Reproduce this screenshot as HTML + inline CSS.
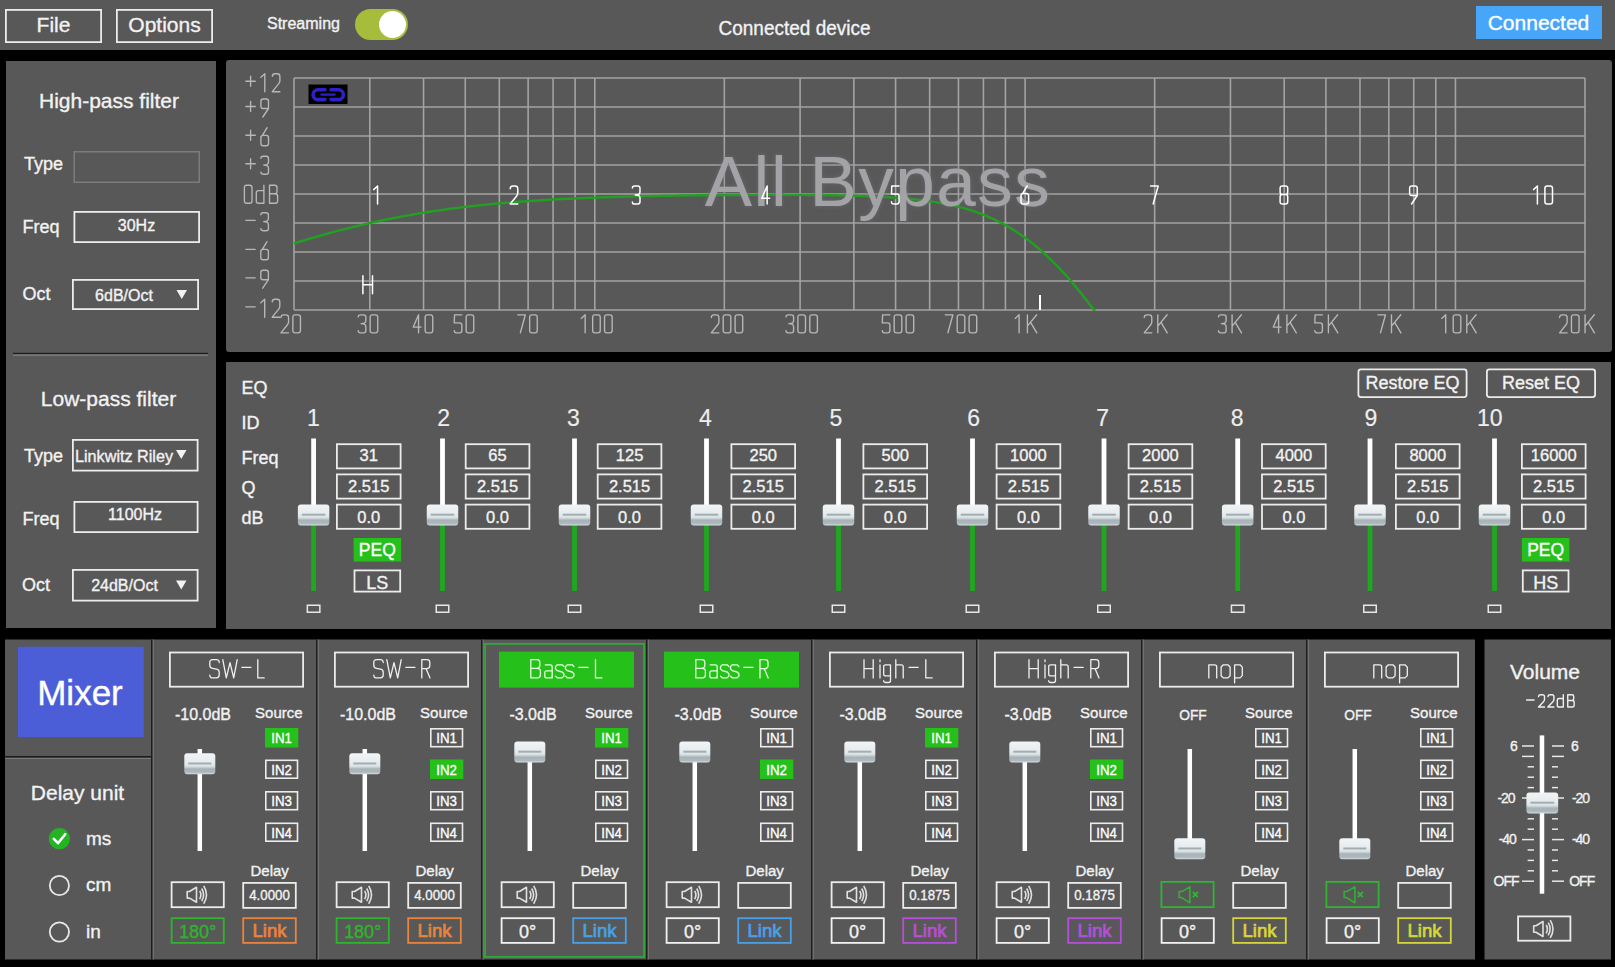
<!DOCTYPE html>
<html><head><meta charset="utf-8"><title>DSP</title>
<style>
html,body{margin:0;padding:0;background:#000;overflow:hidden;}
svg{display:block;font-family:"Liberation Sans",sans-serif;}
</style></head><body>
<svg width="1615" height="967" viewBox="0 0 1615 967">
<defs>
<linearGradient id="thumb" x1="0" y1="0" x2="0" y2="1">
<stop offset="0" stop-color="#f2f5f6"/>
<stop offset="0.40" stop-color="#e6ecef"/>
<stop offset="0.60" stop-color="#dde5e8"/>
<stop offset="0.68" stop-color="#c4ced2"/>
<stop offset="0.74" stop-color="#a8b3b8"/>
<stop offset="0.90" stop-color="#adb8bd"/>
<stop offset="1" stop-color="#d8e0e3"/>
</linearGradient>
<filter id="glow" x="-10%" y="-30%" width="120%" height="160%">
<feGaussianBlur in="SourceAlpha" stdDeviation="2.2" result="b"/>
<feFlood flood-color="#6a6e7c" flood-opacity="0.8"/>
<feComposite in2="b" operator="in" result="g"/>
<feMerge><feMergeNode in="g"/><feMergeNode in="SourceGraphic"/></feMerge>
</filter>
</defs>
<rect x="0.00" y="0.00" width="1615.00" height="967.00" fill="#000"/>
<rect x="0.00" y="0.00" width="1615.00" height="50.00" fill="#585858"/>
<rect x="5.90" y="9.90" width="95.20" height="32.20" fill="none" stroke="#ececec" stroke-width="1.8"/>
<text x="53.50" y="31.60" font-size="21" fill="#f2f2f2" text-anchor="middle" stroke="#f2f2f2" stroke-width="0.35">File</text>
<rect x="116.90" y="9.90" width="95.20" height="32.20" fill="none" stroke="#ececec" stroke-width="1.8"/>
<text x="164.50" y="31.60" font-size="21" fill="#f2f2f2" text-anchor="middle" stroke="#f2f2f2" stroke-width="0.35">Options</text>
<text x="267.00" y="29.00" font-size="16" fill="#f2f2f2" text-anchor="start" stroke="#f2f2f2" stroke-width="0.35">Streaming</text>
<rect x="355.00" y="9.00" width="53.00" height="31.00" rx="15.5" fill="#a5bd3a"/>
<circle cx="392.5" cy="24.5" r="13.5" fill="#ffffff"/>
<text transform="translate(718.50,34.70) scale(0.95,1)" font-size="20" fill="#f2f2f2" text-anchor="start" stroke="#f2f2f2" stroke-width="0.35">Connected device</text>
<rect x="1476.00" y="6.00" width="126.00" height="33.00" fill="#47a6f7"/>
<text x="1538.50" y="30.20" font-size="21" fill="#ffffff" text-anchor="middle" stroke="#ffffff" stroke-width="0.35">Connected</text>
<rect x="6.00" y="61.00" width="210.00" height="567.00" fill="#585858"/>
<text x="109.00" y="107.50" font-size="21" fill="#f2f2f2" text-anchor="middle" stroke="#f2f2f2" stroke-width="0.35">High-pass filter</text>
<text x="24.00" y="169.50" font-size="18" fill="#f2f2f2" text-anchor="start" stroke="#f2f2f2" stroke-width="0.35">Type</text>
<rect x="74.25" y="151.75" width="125.00" height="30.50" fill="none" stroke="#7c7c7c" stroke-width="1.5"/>
<text x="22.50" y="233.00" font-size="18" fill="#f2f2f2" text-anchor="start" stroke="#f2f2f2" stroke-width="0.35">Freq</text>
<rect x="74.40" y="211.90" width="124.70" height="30.20" fill="none" stroke="#ececec" stroke-width="1.8"/>
<text x="136.50" y="231.00" font-size="16" fill="#f2f2f2" text-anchor="middle" stroke="#f2f2f2" stroke-width="0.35">30Hz</text>
<text x="22.50" y="300.00" font-size="18" fill="#f2f2f2" text-anchor="start" stroke="#f2f2f2" stroke-width="0.35">Oct</text>
<rect x="72.90" y="279.90" width="125.20" height="29.20" fill="none" stroke="#ececec" stroke-width="1.8"/>
<text x="124.00" y="301.00" font-size="16" fill="#f2f2f2" text-anchor="middle" stroke="#f2f2f2" stroke-width="0.35">6dB/Oct</text>
<path d="M176.5,290 L187,290 L181.75,299 Z" fill="#f2f2f2"/>
<rect x="13.00" y="352.80" width="195.00" height="1.60" fill="#1c1c1c"/>
<rect x="13.00" y="354.40" width="195.00" height="1.30" fill="#858585"/>
<text x="108.50" y="406.00" font-size="21" fill="#f2f2f2" text-anchor="middle" stroke="#f2f2f2" stroke-width="0.35">Low-pass filter</text>
<text x="24.00" y="461.50" font-size="18" fill="#f2f2f2" text-anchor="start" stroke="#f2f2f2" stroke-width="0.35">Type</text>
<rect x="72.90" y="439.90" width="124.70" height="30.70" fill="none" stroke="#ececec" stroke-width="1.8"/>
<text x="75.00" y="461.50" font-size="16.2" fill="#f2f2f2" text-anchor="start" stroke="#f2f2f2" stroke-width="0.35">Linkwitz Riley</text>
<path d="M176,450 L186.5,450 L181.25,459 Z" fill="#f2f2f2"/>
<text x="22.50" y="525.00" font-size="18" fill="#f2f2f2" text-anchor="start" stroke="#f2f2f2" stroke-width="0.35">Freq</text>
<rect x="74.40" y="501.90" width="123.20" height="30.20" fill="none" stroke="#ececec" stroke-width="1.8"/>
<text x="135.00" y="520.00" font-size="16" fill="#f2f2f2" text-anchor="middle" stroke="#f2f2f2" stroke-width="0.35">1100Hz</text>
<text x="22.00" y="590.50" font-size="18" fill="#f2f2f2" text-anchor="start" stroke="#f2f2f2" stroke-width="0.35">Oct</text>
<rect x="72.90" y="569.90" width="124.70" height="30.70" fill="none" stroke="#ececec" stroke-width="1.8"/>
<text x="124.50" y="591.00" font-size="16" fill="#f2f2f2" text-anchor="middle" stroke="#f2f2f2" stroke-width="0.35">24dB/Oct</text>
<path d="M176,580.5 L186.5,580.5 L181.25,589.5 Z" fill="#f2f2f2"/>
<rect x="226.00" y="60.00" width="1386.00" height="292.00" rx="3" fill="#585858"/>
<g stroke="#a3a3a3" stroke-width="1.6" fill="none">
<line x1="294" y1="78" x2="1585" y2="78"/>
<line x1="294" y1="107" x2="1585" y2="107"/>
<line x1="294" y1="136" x2="1585" y2="136"/>
<line x1="294" y1="165" x2="1585" y2="165"/>
<line x1="294" y1="194" x2="1585" y2="194"/>
<line x1="294" y1="223" x2="1585" y2="223"/>
<line x1="294" y1="252" x2="1585" y2="252"/>
<line x1="294" y1="281" x2="1585" y2="281"/>
<line x1="294" y1="310" x2="1585" y2="310"/>
<line x1="294.00" y1="78" x2="294.00" y2="310"/>
<line x1="369.78" y1="78" x2="369.78" y2="310"/>
<line x1="423.54" y1="78" x2="423.54" y2="310"/>
<line x1="465.25" y1="78" x2="465.25" y2="310"/>
<line x1="499.32" y1="78" x2="499.32" y2="310"/>
<line x1="528.13" y1="78" x2="528.13" y2="310"/>
<line x1="553.09" y1="78" x2="553.09" y2="310"/>
<line x1="575.10" y1="78" x2="575.10" y2="310"/>
<line x1="594.79" y1="78" x2="594.79" y2="310"/>
<line x1="724.33" y1="78" x2="724.33" y2="310"/>
<line x1="800.11" y1="78" x2="800.11" y2="310"/>
<line x1="853.88" y1="78" x2="853.88" y2="310"/>
<line x1="895.58" y1="78" x2="895.58" y2="310"/>
<line x1="929.65" y1="78" x2="929.65" y2="310"/>
<line x1="958.46" y1="78" x2="958.46" y2="310"/>
<line x1="983.42" y1="78" x2="983.42" y2="310"/>
<line x1="1005.43" y1="78" x2="1005.43" y2="310"/>
<line x1="1025.12" y1="78" x2="1025.12" y2="310"/>
<line x1="1154.67" y1="78" x2="1154.67" y2="310"/>
<line x1="1230.44" y1="78" x2="1230.44" y2="310"/>
<line x1="1284.21" y1="78" x2="1284.21" y2="310"/>
<line x1="1325.91" y1="78" x2="1325.91" y2="310"/>
<line x1="1359.99" y1="78" x2="1359.99" y2="310"/>
<line x1="1388.80" y1="78" x2="1388.80" y2="310"/>
<line x1="1413.75" y1="78" x2="1413.75" y2="310"/>
<line x1="1435.77" y1="78" x2="1435.77" y2="310"/>
<line x1="1455.46" y1="78" x2="1455.46" y2="310"/>
<line x1="1585.00" y1="78" x2="1585.00" y2="310"/>
</g>
<g fill="none" stroke="#b8b8b8" stroke-width="1.35" stroke-linecap="round" stroke-linejoin="round">
<path transform="translate(245.20,73.00) scale(1.0,1.0)" vector-effect="non-scaling-stroke" d="M0.7,8.2 L10.1,8.2 M5.4,3.2 L5.4,13.2"/>
<path transform="translate(260.20,73.00) scale(1.0,1.0)" vector-effect="non-scaling-stroke" d="M0.7,4.3 L4.6,0.7 L4.6,18.7"/>
<path transform="translate(271.60,73.00) scale(1.0,1.0)" vector-effect="non-scaling-stroke" d="M0.7,3.4 Q0.9,0.7 3.4,0.7 L5.6,0.7 Q8.3,0.7 8.3,3.4 L8.3,7.8 Q8.3,9.4 7,10.9 L0.7,18.7 L8.3,18.7"/>
</g>
<g fill="none" stroke="#b8b8b8" stroke-width="1.35" stroke-linecap="round" stroke-linejoin="round">
<path transform="translate(245.20,98.30) scale(1.0,1.0)" vector-effect="non-scaling-stroke" d="M0.7,8.2 L10.1,8.2 M5.4,3.2 L5.4,13.2"/>
<path transform="translate(260.20,98.30) scale(1.0,1.0)" vector-effect="non-scaling-stroke" d="M8.3,10.2 L2.9,10.2 Q0.7,10.2 0.7,8 L0.7,2.9 Q0.7,0.7 2.9,0.7 L6.1,0.7 Q8.3,0.7 8.3,2.9 L8.3,10.2 L2.6,18.7"/>
</g>
<g fill="none" stroke="#b8b8b8" stroke-width="1.35" stroke-linecap="round" stroke-linejoin="round">
<path transform="translate(245.20,127.00) scale(1.0,1.0)" vector-effect="non-scaling-stroke" d="M0.7,8.2 L10.1,8.2 M5.4,3.2 L5.4,13.2"/>
<path transform="translate(260.20,127.00) scale(1.0,1.0)" vector-effect="non-scaling-stroke" d="M6.9,0.7 L2.2,8.3 M2.9,8.3 L6.1,8.3 Q8.3,8.3 8.3,10.5 L8.3,16.5 Q8.3,18.7 6.1,18.7 L2.9,18.7 Q0.7,18.7 0.7,16.5 L0.7,10.5 Q0.7,8.3 2.9,8.3 Z"/>
</g>
<g fill="none" stroke="#b8b8b8" stroke-width="1.35" stroke-linecap="round" stroke-linejoin="round">
<path transform="translate(245.20,155.50) scale(1.0,1.0)" vector-effect="non-scaling-stroke" d="M0.7,8.2 L10.1,8.2 M5.4,3.2 L5.4,13.2"/>
<path transform="translate(260.20,155.50) scale(1.0,1.0)" vector-effect="non-scaling-stroke" d="M0.7,2.8 Q0.7,0.7 2.9,0.7 L6.1,0.7 Q8.3,0.7 8.3,2.9 L8.3,6.6 Q8.3,8.2 6.8,9.1 L3.6,9.6 L6.8,10.1 Q8.3,11 8.3,12.6 L8.3,16.5 Q8.3,18.7 6.1,18.7 L2.9,18.7 Q0.7,18.7 0.7,16.6"/>
</g>
<g fill="none" stroke="#b8b8b8" stroke-width="1.35" stroke-linecap="round" stroke-linejoin="round">
<path transform="translate(243.70,184.50) scale(1.0,1.0)" vector-effect="non-scaling-stroke" d="M3,0.7 L6,0.7 Q8.3,0.7 8.3,3 L8.3,16.4 Q8.3,18.7 6,18.7 L3,18.7 Q0.7,18.7 0.7,16.4 L0.7,3 Q0.7,0.7 3,0.7 Z"/>
<path transform="translate(255.60,184.50) scale(1.0,1.0)" vector-effect="non-scaling-stroke" d="M8.3,0.7 L8.3,18.7 L2.9,18.7 Q0.7,18.7 0.7,16.5 L0.7,8.3 Q0.7,6.1 2.9,6.1 L8.3,6.1"/>
<path transform="translate(268.80,184.50) scale(1.0,1.0)" vector-effect="non-scaling-stroke" d="M0.7,0.7 L6,0.7 Q8.2,0.7 8.2,2.9 L8.2,7 Q8.2,9.2 6,9.2 L0.7,9.2 M6,9.2 Q8.8,9.2 8.8,11.4 L8.8,16.5 Q8.8,18.7 6.6,18.7 L0.7,18.7 L0.7,0.7"/>
</g>
<g fill="none" stroke="#b8b8b8" stroke-width="1.35" stroke-linecap="round" stroke-linejoin="round">
<path transform="translate(245.10,212.00) scale(1.0,1.0)" vector-effect="non-scaling-stroke" d="M0.7,8.3 L10.1,8.3"/>
<path transform="translate(260.10,212.00) scale(1.0,1.0)" vector-effect="non-scaling-stroke" d="M0.7,2.8 Q0.7,0.7 2.9,0.7 L6.1,0.7 Q8.3,0.7 8.3,2.9 L8.3,6.6 Q8.3,8.2 6.8,9.1 L3.6,9.6 L6.8,10.1 Q8.3,11 8.3,12.6 L8.3,16.5 Q8.3,18.7 6.1,18.7 L2.9,18.7 Q0.7,18.7 0.7,16.6"/>
</g>
<g fill="none" stroke="#b8b8b8" stroke-width="1.35" stroke-linecap="round" stroke-linejoin="round">
<path transform="translate(245.10,241.00) scale(1.0,1.0)" vector-effect="non-scaling-stroke" d="M0.7,8.3 L10.1,8.3"/>
<path transform="translate(260.10,241.00) scale(1.0,1.0)" vector-effect="non-scaling-stroke" d="M6.9,0.7 L2.2,8.3 M2.9,8.3 L6.1,8.3 Q8.3,8.3 8.3,10.5 L8.3,16.5 Q8.3,18.7 6.1,18.7 L2.9,18.7 Q0.7,18.7 0.7,16.5 L0.7,10.5 Q0.7,8.3 2.9,8.3 Z"/>
</g>
<g fill="none" stroke="#b8b8b8" stroke-width="1.35" stroke-linecap="round" stroke-linejoin="round">
<path transform="translate(245.10,269.50) scale(1.0,1.0)" vector-effect="non-scaling-stroke" d="M0.7,8.3 L10.1,8.3"/>
<path transform="translate(260.10,269.50) scale(1.0,1.0)" vector-effect="non-scaling-stroke" d="M8.3,10.2 L2.9,10.2 Q0.7,10.2 0.7,8 L0.7,2.9 Q0.7,0.7 2.9,0.7 L6.1,0.7 Q8.3,0.7 8.3,2.9 L8.3,10.2 L2.6,18.7"/>
</g>
<g fill="none" stroke="#b8b8b8" stroke-width="1.35" stroke-linecap="round" stroke-linejoin="round">
<path transform="translate(245.10,298.50) scale(1.0,1.0)" vector-effect="non-scaling-stroke" d="M0.7,8.3 L10.1,8.3"/>
<path transform="translate(260.10,298.50) scale(1.0,1.0)" vector-effect="non-scaling-stroke" d="M0.7,4.3 L4.6,0.7 L4.6,18.7"/>
<path transform="translate(271.50,298.50) scale(1.0,1.0)" vector-effect="non-scaling-stroke" d="M0.7,3.4 Q0.9,0.7 3.4,0.7 L5.6,0.7 Q8.3,0.7 8.3,3.4 L8.3,7.8 Q8.3,9.4 7,10.9 L0.7,18.7 L8.3,18.7"/>
</g>
<g fill="none" stroke="#b8b8b8" stroke-width="1.35" stroke-linecap="round" stroke-linejoin="round">
<path transform="translate(280.25,314.10) scale(1.0,1.0)" vector-effect="non-scaling-stroke" d="M0.7,3.4 Q0.9,0.7 3.4,0.7 L5.6,0.7 Q8.3,0.7 8.3,3.4 L8.3,7.8 Q8.3,9.4 7,10.9 L0.7,18.7 L8.3,18.7"/>
<path transform="translate(292.15,314.10) scale(1.0,1.0)" vector-effect="non-scaling-stroke" d="M3,0.7 L6,0.7 Q8.3,0.7 8.3,3 L8.3,16.4 Q8.3,18.7 6,18.7 L3,18.7 Q0.7,18.7 0.7,16.4 L0.7,3 Q0.7,0.7 3,0.7 Z"/>
</g>
<g fill="none" stroke="#b8b8b8" stroke-width="1.35" stroke-linecap="round" stroke-linejoin="round">
<path transform="translate(357.55,314.10) scale(1.0,1.0)" vector-effect="non-scaling-stroke" d="M0.7,2.8 Q0.7,0.7 2.9,0.7 L6.1,0.7 Q8.3,0.7 8.3,2.9 L8.3,6.6 Q8.3,8.2 6.8,9.1 L3.6,9.6 L6.8,10.1 Q8.3,11 8.3,12.6 L8.3,16.5 Q8.3,18.7 6.1,18.7 L2.9,18.7 Q0.7,18.7 0.7,16.6"/>
<path transform="translate(369.45,314.10) scale(1.0,1.0)" vector-effect="non-scaling-stroke" d="M3,0.7 L6,0.7 Q8.3,0.7 8.3,3 L8.3,16.4 Q8.3,18.7 6,18.7 L3,18.7 Q0.7,18.7 0.7,16.4 L0.7,3 Q0.7,0.7 3,0.7 Z"/>
</g>
<g fill="none" stroke="#b8b8b8" stroke-width="1.35" stroke-linecap="round" stroke-linejoin="round">
<path transform="translate(412.55,314.10) scale(1.0,1.0)" vector-effect="non-scaling-stroke" d="M6,0.7 L0.7,13 L8.5,13 M6,0.7 L6,18.7"/>
<path transform="translate(424.45,314.10) scale(1.0,1.0)" vector-effect="non-scaling-stroke" d="M3,0.7 L6,0.7 Q8.3,0.7 8.3,3 L8.3,16.4 Q8.3,18.7 6,18.7 L3,18.7 Q0.7,18.7 0.7,16.4 L0.7,3 Q0.7,0.7 3,0.7 Z"/>
</g>
<g fill="none" stroke="#b8b8b8" stroke-width="1.35" stroke-linecap="round" stroke-linejoin="round">
<path transform="translate(453.55,314.10) scale(1.0,1.0)" vector-effect="non-scaling-stroke" d="M8.3,0.7 L1,0.7 L0.7,8.8 L6.1,8.8 Q8.3,8.8 8.3,11 L8.3,16.5 Q8.3,18.7 6.1,18.7 L2.9,18.7 Q0.7,18.7 0.7,16.5"/>
<path transform="translate(465.45,314.10) scale(1.0,1.0)" vector-effect="non-scaling-stroke" d="M3,0.7 L6,0.7 Q8.3,0.7 8.3,3 L8.3,16.4 Q8.3,18.7 6,18.7 L3,18.7 Q0.7,18.7 0.7,16.4 L0.7,3 Q0.7,0.7 3,0.7 Z"/>
</g>
<g fill="none" stroke="#b8b8b8" stroke-width="1.35" stroke-linecap="round" stroke-linejoin="round">
<path transform="translate(517.05,314.10) scale(1.0,1.0)" vector-effect="non-scaling-stroke" d="M0.7,0.7 L8.3,0.7 L3.3,18.7"/>
<path transform="translate(528.95,314.10) scale(1.0,1.0)" vector-effect="non-scaling-stroke" d="M3,0.7 L6,0.7 Q8.3,0.7 8.3,3 L8.3,16.4 Q8.3,18.7 6,18.7 L3,18.7 Q0.7,18.7 0.7,16.4 L0.7,3 Q0.7,0.7 3,0.7 Z"/>
</g>
<g fill="none" stroke="#b8b8b8" stroke-width="1.35" stroke-linecap="round" stroke-linejoin="round">
<path transform="translate(580.55,314.10) scale(1.0,1.0)" vector-effect="non-scaling-stroke" d="M0.7,4.3 L4.6,0.7 L4.6,18.7"/>
<path transform="translate(591.95,314.10) scale(1.0,1.0)" vector-effect="non-scaling-stroke" d="M3,0.7 L6,0.7 Q8.3,0.7 8.3,3 L8.3,16.4 Q8.3,18.7 6,18.7 L3,18.7 Q0.7,18.7 0.7,16.4 L0.7,3 Q0.7,0.7 3,0.7 Z"/>
<path transform="translate(603.85,314.10) scale(1.0,1.0)" vector-effect="non-scaling-stroke" d="M3,0.7 L6,0.7 Q8.3,0.7 8.3,3 L8.3,16.4 Q8.3,18.7 6,18.7 L3,18.7 Q0.7,18.7 0.7,16.4 L0.7,3 Q0.7,0.7 3,0.7 Z"/>
</g>
<g fill="none" stroke="#b8b8b8" stroke-width="1.35" stroke-linecap="round" stroke-linejoin="round">
<path transform="translate(710.60,314.10) scale(1.0,1.0)" vector-effect="non-scaling-stroke" d="M0.7,3.4 Q0.9,0.7 3.4,0.7 L5.6,0.7 Q8.3,0.7 8.3,3.4 L8.3,7.8 Q8.3,9.4 7,10.9 L0.7,18.7 L8.3,18.7"/>
<path transform="translate(722.50,314.10) scale(1.0,1.0)" vector-effect="non-scaling-stroke" d="M3,0.7 L6,0.7 Q8.3,0.7 8.3,3 L8.3,16.4 Q8.3,18.7 6,18.7 L3,18.7 Q0.7,18.7 0.7,16.4 L0.7,3 Q0.7,0.7 3,0.7 Z"/>
<path transform="translate(734.40,314.10) scale(1.0,1.0)" vector-effect="non-scaling-stroke" d="M3,0.7 L6,0.7 Q8.3,0.7 8.3,3 L8.3,16.4 Q8.3,18.7 6,18.7 L3,18.7 Q0.7,18.7 0.7,16.4 L0.7,3 Q0.7,0.7 3,0.7 Z"/>
</g>
<g fill="none" stroke="#b8b8b8" stroke-width="1.35" stroke-linecap="round" stroke-linejoin="round">
<path transform="translate(785.30,314.10) scale(1.0,1.0)" vector-effect="non-scaling-stroke" d="M0.7,2.8 Q0.7,0.7 2.9,0.7 L6.1,0.7 Q8.3,0.7 8.3,2.9 L8.3,6.6 Q8.3,8.2 6.8,9.1 L3.6,9.6 L6.8,10.1 Q8.3,11 8.3,12.6 L8.3,16.5 Q8.3,18.7 6.1,18.7 L2.9,18.7 Q0.7,18.7 0.7,16.6"/>
<path transform="translate(797.20,314.10) scale(1.0,1.0)" vector-effect="non-scaling-stroke" d="M3,0.7 L6,0.7 Q8.3,0.7 8.3,3 L8.3,16.4 Q8.3,18.7 6,18.7 L3,18.7 Q0.7,18.7 0.7,16.4 L0.7,3 Q0.7,0.7 3,0.7 Z"/>
<path transform="translate(809.10,314.10) scale(1.0,1.0)" vector-effect="non-scaling-stroke" d="M3,0.7 L6,0.7 Q8.3,0.7 8.3,3 L8.3,16.4 Q8.3,18.7 6,18.7 L3,18.7 Q0.7,18.7 0.7,16.4 L0.7,3 Q0.7,0.7 3,0.7 Z"/>
</g>
<g fill="none" stroke="#b8b8b8" stroke-width="1.35" stroke-linecap="round" stroke-linejoin="round">
<path transform="translate(881.60,314.10) scale(1.0,1.0)" vector-effect="non-scaling-stroke" d="M8.3,0.7 L1,0.7 L0.7,8.8 L6.1,8.8 Q8.3,8.8 8.3,11 L8.3,16.5 Q8.3,18.7 6.1,18.7 L2.9,18.7 Q0.7,18.7 0.7,16.5"/>
<path transform="translate(893.50,314.10) scale(1.0,1.0)" vector-effect="non-scaling-stroke" d="M3,0.7 L6,0.7 Q8.3,0.7 8.3,3 L8.3,16.4 Q8.3,18.7 6,18.7 L3,18.7 Q0.7,18.7 0.7,16.4 L0.7,3 Q0.7,0.7 3,0.7 Z"/>
<path transform="translate(905.40,314.10) scale(1.0,1.0)" vector-effect="non-scaling-stroke" d="M3,0.7 L6,0.7 Q8.3,0.7 8.3,3 L8.3,16.4 Q8.3,18.7 6,18.7 L3,18.7 Q0.7,18.7 0.7,16.4 L0.7,3 Q0.7,0.7 3,0.7 Z"/>
</g>
<g fill="none" stroke="#b8b8b8" stroke-width="1.35" stroke-linecap="round" stroke-linejoin="round">
<path transform="translate(944.60,314.10) scale(1.0,1.0)" vector-effect="non-scaling-stroke" d="M0.7,0.7 L8.3,0.7 L3.3,18.7"/>
<path transform="translate(956.50,314.10) scale(1.0,1.0)" vector-effect="non-scaling-stroke" d="M3,0.7 L6,0.7 Q8.3,0.7 8.3,3 L8.3,16.4 Q8.3,18.7 6,18.7 L3,18.7 Q0.7,18.7 0.7,16.4 L0.7,3 Q0.7,0.7 3,0.7 Z"/>
<path transform="translate(968.40,314.10) scale(1.0,1.0)" vector-effect="non-scaling-stroke" d="M3,0.7 L6,0.7 Q8.3,0.7 8.3,3 L8.3,16.4 Q8.3,18.7 6,18.7 L3,18.7 Q0.7,18.7 0.7,16.4 L0.7,3 Q0.7,0.7 3,0.7 Z"/>
</g>
<g fill="none" stroke="#b8b8b8" stroke-width="1.35" stroke-linecap="round" stroke-linejoin="round">
<path transform="translate(1014.50,314.10) scale(1.0,1.0)" vector-effect="non-scaling-stroke" d="M0.7,4.3 L4.6,0.7 L4.6,18.7"/>
<path transform="translate(1026.70,314.10) scale(1.0,1.0)" vector-effect="non-scaling-stroke" d="M0.7,0.7 L0.7,18.7 M10,0.7 L0.7,12 M3.9,8.2 L10.1,18.7"/>
</g>
<g fill="none" stroke="#b8b8b8" stroke-width="1.35" stroke-linecap="round" stroke-linejoin="round">
<path transform="translate(1143.50,314.10) scale(1.0,1.0)" vector-effect="non-scaling-stroke" d="M0.7,3.4 Q0.9,0.7 3.4,0.7 L5.6,0.7 Q8.3,0.7 8.3,3.4 L8.3,7.8 Q8.3,9.4 7,10.9 L0.7,18.7 L8.3,18.7"/>
<path transform="translate(1157.10,314.10) scale(1.0,1.0)" vector-effect="non-scaling-stroke" d="M0.7,0.7 L0.7,18.7 M10,0.7 L0.7,12 M3.9,8.2 L10.1,18.7"/>
</g>
<g fill="none" stroke="#b8b8b8" stroke-width="1.35" stroke-linecap="round" stroke-linejoin="round">
<path transform="translate(1217.80,314.10) scale(1.0,1.0)" vector-effect="non-scaling-stroke" d="M0.7,2.8 Q0.7,0.7 2.9,0.7 L6.1,0.7 Q8.3,0.7 8.3,2.9 L8.3,6.6 Q8.3,8.2 6.8,9.1 L3.6,9.6 L6.8,10.1 Q8.3,11 8.3,12.6 L8.3,16.5 Q8.3,18.7 6.1,18.7 L2.9,18.7 Q0.7,18.7 0.7,16.6"/>
<path transform="translate(1231.40,314.10) scale(1.0,1.0)" vector-effect="non-scaling-stroke" d="M0.7,0.7 L0.7,18.7 M10,0.7 L0.7,12 M3.9,8.2 L10.1,18.7"/>
</g>
<g fill="none" stroke="#b8b8b8" stroke-width="1.35" stroke-linecap="round" stroke-linejoin="round">
<path transform="translate(1272.60,314.10) scale(1.0,1.0)" vector-effect="non-scaling-stroke" d="M6,0.7 L0.7,13 L8.5,13 M6,0.7 L6,18.7"/>
<path transform="translate(1286.20,314.10) scale(1.0,1.0)" vector-effect="non-scaling-stroke" d="M0.7,0.7 L0.7,18.7 M10,0.7 L0.7,12 M3.9,8.2 L10.1,18.7"/>
</g>
<g fill="none" stroke="#b8b8b8" stroke-width="1.35" stroke-linecap="round" stroke-linejoin="round">
<path transform="translate(1314.10,314.10) scale(1.0,1.0)" vector-effect="non-scaling-stroke" d="M8.3,0.7 L1,0.7 L0.7,8.8 L6.1,8.8 Q8.3,8.8 8.3,11 L8.3,16.5 Q8.3,18.7 6.1,18.7 L2.9,18.7 Q0.7,18.7 0.7,16.5"/>
<path transform="translate(1327.70,314.10) scale(1.0,1.0)" vector-effect="non-scaling-stroke" d="M0.7,0.7 L0.7,18.7 M10,0.7 L0.7,12 M3.9,8.2 L10.1,18.7"/>
</g>
<g fill="none" stroke="#b8b8b8" stroke-width="1.35" stroke-linecap="round" stroke-linejoin="round">
<path transform="translate(1377.20,314.10) scale(1.0,1.0)" vector-effect="non-scaling-stroke" d="M0.7,0.7 L8.3,0.7 L3.3,18.7"/>
<path transform="translate(1390.80,314.10) scale(1.0,1.0)" vector-effect="non-scaling-stroke" d="M0.7,0.7 L0.7,18.7 M10,0.7 L0.7,12 M3.9,8.2 L10.1,18.7"/>
</g>
<g fill="none" stroke="#b8b8b8" stroke-width="1.35" stroke-linecap="round" stroke-linejoin="round">
<path transform="translate(1441.10,314.10) scale(1.0,1.0)" vector-effect="non-scaling-stroke" d="M0.7,4.3 L4.6,0.7 L4.6,18.7"/>
<path transform="translate(1452.50,314.10) scale(1.0,1.0)" vector-effect="non-scaling-stroke" d="M3,0.7 L6,0.7 Q8.3,0.7 8.3,3 L8.3,16.4 Q8.3,18.7 6,18.7 L3,18.7 Q0.7,18.7 0.7,16.4 L0.7,3 Q0.7,0.7 3,0.7 Z"/>
<path transform="translate(1466.10,314.10) scale(1.0,1.0)" vector-effect="non-scaling-stroke" d="M0.7,0.7 L0.7,18.7 M10,0.7 L0.7,12 M3.9,8.2 L10.1,18.7"/>
</g>
<g fill="none" stroke="#b8b8b8" stroke-width="1.35" stroke-linecap="round" stroke-linejoin="round">
<path transform="translate(1558.85,314.10) scale(1.0,1.0)" vector-effect="non-scaling-stroke" d="M0.7,3.4 Q0.9,0.7 3.4,0.7 L5.6,0.7 Q8.3,0.7 8.3,3.4 L8.3,7.8 Q8.3,9.4 7,10.9 L0.7,18.7 L8.3,18.7"/>
<path transform="translate(1570.75,314.10) scale(1.0,1.0)" vector-effect="non-scaling-stroke" d="M3,0.7 L6,0.7 Q8.3,0.7 8.3,3 L8.3,16.4 Q8.3,18.7 6,18.7 L3,18.7 Q0.7,18.7 0.7,16.4 L0.7,3 Q0.7,0.7 3,0.7 Z"/>
<path transform="translate(1584.35,314.10) scale(1.0,1.0)" vector-effect="non-scaling-stroke" d="M0.7,0.7 L0.7,18.7 M10,0.7 L0.7,12 M3.9,8.2 L10.1,18.7"/>
</g>
<path d="M294.00,243.48 L295.86,242.91 L297.72,242.33 L299.58,241.76 L301.44,241.20 L303.30,240.63 L305.16,240.08 L307.02,239.52 L308.88,238.97 L310.74,238.42 L312.60,237.88 L314.46,237.34 L316.32,236.80 L318.18,236.27 L320.03,235.74 L321.89,235.22 L323.75,234.70 L325.61,234.18 L327.47,233.67 L329.33,233.16 L331.19,232.66 L333.05,232.15 L334.91,231.66 L336.77,231.17 L338.63,230.68 L340.49,230.19 L342.35,229.71 L344.21,229.23 L346.07,228.76 L347.93,228.29 L349.79,227.83 L351.65,227.37 L353.51,226.91 L355.37,226.46 L357.23,226.01 L359.09,225.57 L360.95,225.13 L362.81,224.69 L364.67,224.26 L366.53,223.84 L368.39,223.41 L370.24,222.99 L372.10,222.58 L373.96,222.17 L375.82,221.76 L377.68,221.36 L379.54,220.96 L381.40,220.57 L383.26,220.18 L385.12,219.79 L386.98,219.41 L388.84,219.04 L390.70,218.66 L392.56,218.29 L394.42,217.93 L396.28,217.57 L398.14,217.21 L400.00,216.86 L401.86,216.51 L403.72,216.16 L405.58,215.82 L407.44,215.49 L409.30,215.15 L411.16,214.83 L413.02,214.50 L414.88,214.18 L416.74,213.86 L418.60,213.55 L420.45,213.24 L422.31,212.94 L424.17,212.63 L426.03,212.34 L427.89,212.04 L429.75,211.75 L431.61,211.47 L433.47,211.18 L435.33,210.91 L437.19,210.63 L439.05,210.36 L440.91,210.09 L442.77,209.83 L444.63,209.57 L446.49,209.31 L448.35,209.06 L450.21,208.81 L452.07,208.56 L453.93,208.32 L455.79,208.08 L457.65,207.84 L459.51,207.61 L461.37,207.38 L463.23,207.15 L465.09,206.93 L466.95,206.71 L468.81,206.49 L470.66,206.28 L472.52,206.07 L474.38,205.86 L476.24,205.66 L478.10,205.46 L479.96,205.26 L481.82,205.06 L483.68,204.87 L485.54,204.68 L487.40,204.50 L489.26,204.31 L491.12,204.13 L492.98,203.95 L494.84,203.78 L496.70,203.61 L498.56,203.44 L500.42,203.27 L502.28,203.11 L504.14,202.94 L506.00,202.79 L507.86,202.63 L509.72,202.48 L511.58,202.32 L513.44,202.17 L515.30,202.03 L517.16,201.88 L519.02,201.74 L520.88,201.60 L522.73,201.47 L524.59,201.33 L526.45,201.20 L528.31,201.07 L530.17,200.94 L532.03,200.81 L533.89,200.69 L535.75,200.57 L537.61,200.45 L539.47,200.33 L541.33,200.21 L543.19,200.10 L545.05,199.99 L546.91,199.88 L548.77,199.77 L550.63,199.66 L552.49,199.56 L554.35,199.46 L556.21,199.36 L558.07,199.26 L559.93,199.16 L561.79,199.06 L563.65,198.97 L565.51,198.88 L567.37,198.79 L569.23,198.70 L571.09,198.61 L572.94,198.52 L574.80,198.44 L576.66,198.36 L578.52,198.28 L580.38,198.20 L582.24,198.12 L584.10,198.04 L585.96,197.96 L587.82,197.89 L589.68,197.82 L591.54,197.75 L593.40,197.68 L595.26,197.61 L597.12,197.54 L598.98,197.47 L600.84,197.41 L602.70,197.34 L604.56,197.28 L606.42,197.22 L608.28,197.16 L610.14,197.10 L612.00,197.04 L613.86,196.98 L615.72,196.93 L617.58,196.87 L619.44,196.82 L621.30,196.76 L623.15,196.71 L625.01,196.66 L626.87,196.61 L628.73,196.56 L630.59,196.51 L632.45,196.46 L634.31,196.42 L636.17,196.37 L638.03,196.33 L639.89,196.28 L641.75,196.24 L643.61,196.20 L645.47,196.16 L647.33,196.12 L649.19,196.08 L651.05,196.04 L652.91,196.00 L654.77,195.96 L656.63,195.93 L658.49,195.89 L660.35,195.86 L662.21,195.82 L664.07,195.79 L665.93,195.75 L667.79,195.72 L669.65,195.69 L671.51,195.66 L673.36,195.63 L675.22,195.60 L677.08,195.57 L678.94,195.54 L680.80,195.51 L682.66,195.49 L684.52,195.46 L686.38,195.44 L688.24,195.41 L690.10,195.38 L691.96,195.36 L693.82,195.34 L695.68,195.31 L697.54,195.29 L699.40,195.27 L701.26,195.25 L703.12,195.23 L704.98,195.21 L706.84,195.19 L708.70,195.17 L710.56,195.15 L712.42,195.13 L714.28,195.11 L716.14,195.10 L718.00,195.08 L719.86,195.06 L721.72,195.05 L723.57,195.03 L725.43,195.02 L727.29,195.00 L729.15,194.99 L731.01,194.98 L732.87,194.96 L734.73,194.95 L736.59,194.94 L738.45,194.93 L740.31,194.92 L742.17,194.91 L744.03,194.90 L745.89,194.89 L747.75,194.88 L749.61,194.87 L751.47,194.86 L753.33,194.86 L755.19,194.85 L757.05,194.84 L758.91,194.84 L760.77,194.83 L762.63,194.83 L764.49,194.83 L766.35,194.82 L768.21,194.82 L770.07,194.82 L771.93,194.82 L773.78,194.82 L775.64,194.82 L777.50,194.82 L779.36,194.82 L781.22,194.82 L783.08,194.82 L784.94,194.83 L786.80,194.83 L788.66,194.83 L790.52,194.84 L792.38,194.85 L794.24,194.85 L796.10,194.86 L797.96,194.87 L799.82,194.88 L801.68,194.89 L803.54,194.90 L805.40,194.91 L807.26,194.93 L809.12,194.94 L810.98,194.96 L812.84,194.97 L814.70,194.99 L816.56,195.01 L818.42,195.03 L820.28,195.05 L822.14,195.07 L823.99,195.09 L825.85,195.12 L827.71,195.15 L829.57,195.17 L831.43,195.20 L833.29,195.23 L835.15,195.27 L837.01,195.30 L838.87,195.33 L840.73,195.37 L842.59,195.41 L844.45,195.45 L846.31,195.49 L848.17,195.54 L850.03,195.59 L851.89,195.64 L853.75,195.69 L855.61,195.74 L857.47,195.80 L859.33,195.86 L861.19,195.92 L863.05,195.98 L864.91,196.05 L866.77,196.12 L868.63,196.19 L870.49,196.27 L872.35,196.35 L874.20,196.43 L876.06,196.51 L877.92,196.60 L879.78,196.70 L881.64,196.79 L883.50,196.89 L885.36,197.00 L887.22,197.11 L889.08,197.22 L890.94,197.34 L892.80,197.47 L894.66,197.60 L896.52,197.73 L898.38,197.87 L900.24,198.01 L902.10,198.16 L903.96,198.32 L905.82,198.48 L907.68,198.65 L909.54,198.83 L911.40,199.01 L913.26,199.20 L915.12,199.40 L916.98,199.60 L918.84,199.82 L920.70,200.04 L922.56,200.27 L924.41,200.50 L926.27,200.75 L928.13,201.01 L929.99,201.28 L931.85,201.55 L933.71,201.84 L935.57,202.14 L937.43,202.45 L939.29,202.77 L941.15,203.10 L943.01,203.44 L944.87,203.80 L946.73,204.17 L948.59,204.55 L950.45,204.95 L952.31,205.36 L954.17,205.79 L956.03,206.23 L957.89,206.68 L959.75,207.16 L961.61,207.64 L963.47,208.15 L965.33,208.67 L967.19,209.21 L969.05,209.77 L970.91,210.35 L972.77,210.95 L974.63,211.57 L976.48,212.20 L978.34,212.86 L980.20,213.54 L982.06,214.24 L983.92,214.97 L985.78,215.72 L987.64,216.49 L989.50,217.28 L991.36,218.10 L993.22,218.94 L995.08,219.81 L996.94,220.71 L998.80,221.63 L1000.66,222.58 L1002.52,223.55 L1004.38,224.56 L1006.24,225.59 L1008.10,226.65 L1009.96,227.74 L1011.82,228.85 L1013.68,230.00 L1015.54,231.18 L1017.40,232.39 L1019.26,233.63 L1021.12,234.90 L1022.98,236.20 L1024.84,237.54 L1026.69,238.90 L1028.55,240.30 L1030.41,241.73 L1032.27,243.20 L1034.13,244.70 L1035.99,246.23 L1037.85,247.79 L1039.71,249.38 L1041.57,251.01 L1043.43,252.68 L1045.29,254.37 L1047.15,256.10 L1049.01,257.86 L1050.87,259.66 L1052.73,261.49 L1054.59,263.35 L1056.45,265.24 L1058.31,267.17 L1060.17,269.13 L1062.03,271.12 L1063.89,273.14 L1065.75,275.20 L1067.61,277.28 L1069.47,279.40 L1071.33,281.55 L1073.19,283.73 L1075.05,285.93 L1076.90,288.17 L1078.76,290.44 L1080.62,292.74 L1082.48,295.06 L1084.34,297.41 L1086.20,299.79 L1088.06,302.20 L1089.92,304.63 L1091.78,307.09 L1093.64,309.58 L1095.50,310.00" fill="none" stroke="#21a021" stroke-width="2.4"/>
<g filter="url(#glow)">
<text x="878.00" y="206.00" font-size="71" fill="#a3a3a5" text-anchor="middle" letter-spacing="1.5">All Bypass</text>
</g>
<g fill="none" stroke="#ffffff" stroke-width="1.5" stroke-linecap="round" stroke-linejoin="round">
<path transform="translate(372.96,185.30) scale(1.0,1.0)" vector-effect="non-scaling-stroke" d="M0.7,4.3 L4.6,0.7 L4.6,18.7"/>
</g>
<g fill="none" stroke="#ffffff" stroke-width="1.5" stroke-linecap="round" stroke-linejoin="round">
<path transform="translate(509.48,185.30) scale(1.0,1.0)" vector-effect="non-scaling-stroke" d="M0.7,3.4 Q0.9,0.7 3.4,0.7 L5.6,0.7 Q8.3,0.7 8.3,3.4 L8.3,7.8 Q8.3,9.4 7,10.9 L0.7,18.7 L8.3,18.7"/>
</g>
<g fill="none" stroke="#ffffff" stroke-width="1.5" stroke-linecap="round" stroke-linejoin="round">
<path transform="translate(631.69,185.30) scale(1.0,1.0)" vector-effect="non-scaling-stroke" d="M0.7,2.8 Q0.7,0.7 2.9,0.7 L6.1,0.7 Q8.3,0.7 8.3,2.9 L8.3,6.6 Q8.3,8.2 6.8,9.1 L3.6,9.6 L6.8,10.1 Q8.3,11 8.3,12.6 L8.3,16.5 Q8.3,18.7 6.1,18.7 L2.9,18.7 Q0.7,18.7 0.7,16.6"/>
</g>
<g fill="none" stroke="#ffffff" stroke-width="1.5" stroke-linecap="round" stroke-linejoin="round">
<path transform="translate(761.14,185.30) scale(1.0,1.0)" vector-effect="non-scaling-stroke" d="M6,0.7 L0.7,13 L8.5,13 M6,0.7 L6,18.7"/>
</g>
<g fill="none" stroke="#ffffff" stroke-width="1.5" stroke-linecap="round" stroke-linejoin="round">
<path transform="translate(890.78,185.30) scale(1.0,1.0)" vector-effect="non-scaling-stroke" d="M8.3,0.7 L1,0.7 L0.7,8.8 L6.1,8.8 Q8.3,8.8 8.3,11 L8.3,16.5 Q8.3,18.7 6.1,18.7 L2.9,18.7 Q0.7,18.7 0.7,16.5"/>
</g>
<g fill="none" stroke="#ffffff" stroke-width="1.5" stroke-linecap="round" stroke-linejoin="round">
<path transform="translate(1020.32,185.30) scale(1.0,1.0)" vector-effect="non-scaling-stroke" d="M6.9,0.7 L2.2,8.3 M2.9,8.3 L6.1,8.3 Q8.3,8.3 8.3,10.5 L8.3,16.5 Q8.3,18.7 6.1,18.7 L2.9,18.7 Q0.7,18.7 0.7,16.5 L0.7,10.5 Q0.7,8.3 2.9,8.3 Z"/>
</g>
<g fill="none" stroke="#ffffff" stroke-width="1.5" stroke-linecap="round" stroke-linejoin="round">
<path transform="translate(1149.87,185.30) scale(1.0,1.0)" vector-effect="non-scaling-stroke" d="M0.7,0.7 L8.3,0.7 L3.3,18.7"/>
</g>
<g fill="none" stroke="#ffffff" stroke-width="1.5" stroke-linecap="round" stroke-linejoin="round">
<path transform="translate(1279.41,185.30) scale(1.0,1.0)" vector-effect="non-scaling-stroke" d="M2.9,0.7 L6.1,0.7 Q8.3,0.7 8.3,2.9 L8.3,6.9 Q8.3,9.1 6.1,9.1 L2.9,9.1 Q0.7,9.1 0.7,6.9 L0.7,2.9 Q0.7,0.7 2.9,0.7 Z M2.9,9.1 L6.1,9.1 Q8.3,9.1 8.3,11.3 L8.3,16.5 Q8.3,18.7 6.1,18.7 L2.9,18.7 Q0.7,18.7 0.7,16.5 L0.7,11.3 Q0.7,9.1 2.9,9.1 Z"/>
</g>
<g fill="none" stroke="#ffffff" stroke-width="1.5" stroke-linecap="round" stroke-linejoin="round">
<path transform="translate(1408.95,185.30) scale(1.0,1.0)" vector-effect="non-scaling-stroke" d="M8.3,10.2 L2.9,10.2 Q0.7,10.2 0.7,8 L0.7,2.9 Q0.7,0.7 2.9,0.7 L6.1,0.7 Q8.3,0.7 8.3,2.9 L8.3,10.2 L2.6,18.7"/>
</g>
<g fill="none" stroke="#ffffff" stroke-width="1.5" stroke-linecap="round" stroke-linejoin="round">
<path transform="translate(1532.80,185.30) scale(1.0,1.0)" vector-effect="non-scaling-stroke" d="M0.7,4.3 L4.6,0.7 L4.6,18.7"/>
<path transform="translate(1544.20,185.30) scale(1.0,1.0)" vector-effect="non-scaling-stroke" d="M3,0.7 L6,0.7 Q8.3,0.7 8.3,3 L8.3,16.4 Q8.3,18.7 6,18.7 L3,18.7 Q0.7,18.7 0.7,16.4 L0.7,3 Q0.7,0.7 3,0.7 Z"/>
</g>
<g fill="none" stroke="#ffffff" stroke-width="1.5" stroke-linecap="round" stroke-linejoin="round">
<path transform="translate(362.20,275.00) scale(1.0,1.0)" vector-effect="non-scaling-stroke" d="M0.7,0.7 L0.7,18.7 M10.3,0.7 L10.3,18.7 M0.7,9.7 L10.3,9.7"/>
</g>
<line x1="1040" y1="295" x2="1040" y2="310" stroke="#ffffff" stroke-width="2"/>
<rect x="308.50" y="84.50" width="39.00" height="19.50" fill="#000"/>
<g fill="none" stroke="#2b22c8" stroke-width="3.6" stroke-linecap="round">
<path d="M325,89.8 L318,89.8 A4.9,4.9 0 0 0 318,99.6 L325,99.6"/>
<path d="M331,89.8 L338.5,89.8 A4.9,4.9 0 0 1 338.5,99.6 L331,99.6"/>
<path d="M321.5,94.6 L334.5,94.6" stroke-width="2.4"/>
</g>
<rect x="226.00" y="362.00" width="1385.00" height="267.00" fill="#585858"/>
<text x="241.50" y="394.00" font-size="18" fill="#f2f2f2" text-anchor="start" stroke="#f2f2f2" stroke-width="0.35">EQ</text>
<text x="241.50" y="429.00" font-size="18" fill="#f2f2f2" text-anchor="start" stroke="#f2f2f2" stroke-width="0.35">ID</text>
<text x="241.50" y="464.00" font-size="18" fill="#f2f2f2" text-anchor="start" stroke="#f2f2f2" stroke-width="0.35">Freq</text>
<text x="241.50" y="493.50" font-size="18" fill="#f2f2f2" text-anchor="start" stroke="#f2f2f2" stroke-width="0.35">Q</text>
<text x="241.50" y="523.50" font-size="18" fill="#f2f2f2" text-anchor="start" stroke="#f2f2f2" stroke-width="0.35">dB</text>
<rect x="1358.40" y="369.40" width="108.20" height="27.70" rx="2.5" fill="none" stroke="#ececec" stroke-width="1.8"/>
<text x="1412.50" y="389.00" font-size="18" fill="#f2f2f2" text-anchor="middle" stroke="#f2f2f2" stroke-width="0.35">Restore EQ</text>
<rect x="1486.90" y="369.40" width="108.20" height="27.70" rx="2.5" fill="none" stroke="#ececec" stroke-width="1.8"/>
<text x="1541.00" y="389.00" font-size="18" fill="#f2f2f2" text-anchor="middle" stroke="#f2f2f2" stroke-width="0.35">Reset EQ</text>
<text x="313.50" y="425.50" font-size="23" fill="#eeeeee" text-anchor="middle" stroke="#eeeeee" stroke-width="0.15">1</text>
<rect x="311.20" y="438.50" width="4.80" height="76.50" fill="#ffffff"/>
<rect x="311.20" y="515.00" width="4.80" height="76.00" fill="#1fa81f"/>
<rect x="297.85" y="504.50" width="31.50" height="21.00" rx="3" fill="url(#thumb)"/>
<rect x="301.85" y="513.70" width="23.50" height="2.00" fill="#a3adb1"/>
<rect x="307.35" y="605.25" width="12.50" height="7.00" fill="none" stroke="#e8e8e8" stroke-width="1.5"/>
<rect x="336.90" y="444.20" width="63.70" height="24.20" fill="none" stroke="#ececec" stroke-width="1.8"/>
<text x="368.75" y="461.00" font-size="16.5" fill="#f2f2f2" text-anchor="middle" stroke="#f2f2f2" stroke-width="0.35">31</text>
<rect x="336.90" y="474.40" width="63.70" height="24.20" fill="none" stroke="#ececec" stroke-width="1.8"/>
<text x="368.75" y="492.00" font-size="16.5" fill="#f2f2f2" text-anchor="middle" stroke="#f2f2f2" stroke-width="0.35">2.515</text>
<rect x="336.90" y="504.60" width="63.70" height="24.20" fill="none" stroke="#ececec" stroke-width="1.8"/>
<text x="368.75" y="522.50" font-size="16.5" fill="#f2f2f2" text-anchor="middle" stroke="#f2f2f2" stroke-width="0.35">0.0</text>
<text x="443.70" y="425.50" font-size="23" fill="#eeeeee" text-anchor="middle" stroke="#eeeeee" stroke-width="0.15">2</text>
<rect x="440.10" y="438.50" width="4.80" height="76.50" fill="#ffffff"/>
<rect x="440.10" y="515.00" width="4.80" height="76.00" fill="#1fa81f"/>
<rect x="426.75" y="504.50" width="31.50" height="21.00" rx="3" fill="url(#thumb)"/>
<rect x="430.75" y="513.70" width="23.50" height="2.00" fill="#a3adb1"/>
<rect x="436.25" y="605.25" width="12.50" height="7.00" fill="none" stroke="#e8e8e8" stroke-width="1.5"/>
<rect x="465.70" y="444.20" width="63.70" height="24.20" fill="none" stroke="#ececec" stroke-width="1.8"/>
<text x="497.55" y="461.00" font-size="16.5" fill="#f2f2f2" text-anchor="middle" stroke="#f2f2f2" stroke-width="0.35">65</text>
<rect x="465.70" y="474.40" width="63.70" height="24.20" fill="none" stroke="#ececec" stroke-width="1.8"/>
<text x="497.55" y="492.00" font-size="16.5" fill="#f2f2f2" text-anchor="middle" stroke="#f2f2f2" stroke-width="0.35">2.515</text>
<rect x="465.70" y="504.60" width="63.70" height="24.20" fill="none" stroke="#ececec" stroke-width="1.8"/>
<text x="497.55" y="522.50" font-size="16.5" fill="#f2f2f2" text-anchor="middle" stroke="#f2f2f2" stroke-width="0.35">0.0</text>
<text x="573.30" y="425.50" font-size="23" fill="#eeeeee" text-anchor="middle" stroke="#eeeeee" stroke-width="0.15">3</text>
<rect x="572.10" y="438.50" width="4.80" height="76.50" fill="#ffffff"/>
<rect x="572.10" y="515.00" width="4.80" height="76.00" fill="#1fa81f"/>
<rect x="558.75" y="504.50" width="31.50" height="21.00" rx="3" fill="url(#thumb)"/>
<rect x="562.75" y="513.70" width="23.50" height="2.00" fill="#a3adb1"/>
<rect x="568.25" y="605.25" width="12.50" height="7.00" fill="none" stroke="#e8e8e8" stroke-width="1.5"/>
<rect x="597.70" y="444.20" width="63.70" height="24.20" fill="none" stroke="#ececec" stroke-width="1.8"/>
<text x="629.55" y="461.00" font-size="16.5" fill="#f2f2f2" text-anchor="middle" stroke="#f2f2f2" stroke-width="0.35">125</text>
<rect x="597.70" y="474.40" width="63.70" height="24.20" fill="none" stroke="#ececec" stroke-width="1.8"/>
<text x="629.55" y="492.00" font-size="16.5" fill="#f2f2f2" text-anchor="middle" stroke="#f2f2f2" stroke-width="0.35">2.515</text>
<rect x="597.70" y="504.60" width="63.70" height="24.20" fill="none" stroke="#ececec" stroke-width="1.8"/>
<text x="629.55" y="522.50" font-size="16.5" fill="#f2f2f2" text-anchor="middle" stroke="#f2f2f2" stroke-width="0.35">0.0</text>
<text x="705.30" y="425.50" font-size="23" fill="#eeeeee" text-anchor="middle" stroke="#eeeeee" stroke-width="0.15">4</text>
<rect x="704.10" y="438.50" width="4.80" height="76.50" fill="#ffffff"/>
<rect x="704.10" y="515.00" width="4.80" height="76.00" fill="#1fa81f"/>
<rect x="690.75" y="504.50" width="31.50" height="21.00" rx="3" fill="url(#thumb)"/>
<rect x="694.75" y="513.70" width="23.50" height="2.00" fill="#a3adb1"/>
<rect x="700.25" y="605.25" width="12.50" height="7.00" fill="none" stroke="#e8e8e8" stroke-width="1.5"/>
<rect x="731.40" y="444.20" width="63.70" height="24.20" fill="none" stroke="#ececec" stroke-width="1.8"/>
<text x="763.25" y="461.00" font-size="16.5" fill="#f2f2f2" text-anchor="middle" stroke="#f2f2f2" stroke-width="0.35">250</text>
<rect x="731.40" y="474.40" width="63.70" height="24.20" fill="none" stroke="#ececec" stroke-width="1.8"/>
<text x="763.25" y="492.00" font-size="16.5" fill="#f2f2f2" text-anchor="middle" stroke="#f2f2f2" stroke-width="0.35">2.515</text>
<rect x="731.40" y="504.60" width="63.70" height="24.20" fill="none" stroke="#ececec" stroke-width="1.8"/>
<text x="763.25" y="522.50" font-size="16.5" fill="#f2f2f2" text-anchor="middle" stroke="#f2f2f2" stroke-width="0.35">0.0</text>
<text x="835.80" y="425.50" font-size="23" fill="#eeeeee" text-anchor="middle" stroke="#eeeeee" stroke-width="0.15">5</text>
<rect x="836.10" y="438.50" width="4.80" height="76.50" fill="#ffffff"/>
<rect x="836.10" y="515.00" width="4.80" height="76.00" fill="#1fa81f"/>
<rect x="822.75" y="504.50" width="31.50" height="21.00" rx="3" fill="url(#thumb)"/>
<rect x="826.75" y="513.70" width="23.50" height="2.00" fill="#a3adb1"/>
<rect x="832.25" y="605.25" width="12.50" height="7.00" fill="none" stroke="#e8e8e8" stroke-width="1.5"/>
<rect x="863.40" y="444.20" width="63.70" height="24.20" fill="none" stroke="#ececec" stroke-width="1.8"/>
<text x="895.25" y="461.00" font-size="16.5" fill="#f2f2f2" text-anchor="middle" stroke="#f2f2f2" stroke-width="0.35">500</text>
<rect x="863.40" y="474.40" width="63.70" height="24.20" fill="none" stroke="#ececec" stroke-width="1.8"/>
<text x="895.25" y="492.00" font-size="16.5" fill="#f2f2f2" text-anchor="middle" stroke="#f2f2f2" stroke-width="0.35">2.515</text>
<rect x="863.40" y="504.60" width="63.70" height="24.20" fill="none" stroke="#ececec" stroke-width="1.8"/>
<text x="895.25" y="522.50" font-size="16.5" fill="#f2f2f2" text-anchor="middle" stroke="#f2f2f2" stroke-width="0.35">0.0</text>
<text x="973.70" y="425.50" font-size="23" fill="#eeeeee" text-anchor="middle" stroke="#eeeeee" stroke-width="0.15">6</text>
<rect x="970.10" y="438.50" width="4.80" height="76.50" fill="#ffffff"/>
<rect x="970.10" y="515.00" width="4.80" height="76.00" fill="#1fa81f"/>
<rect x="956.75" y="504.50" width="31.50" height="21.00" rx="3" fill="url(#thumb)"/>
<rect x="960.75" y="513.70" width="23.50" height="2.00" fill="#a3adb1"/>
<rect x="966.25" y="605.25" width="12.50" height="7.00" fill="none" stroke="#e8e8e8" stroke-width="1.5"/>
<rect x="996.60" y="444.20" width="63.70" height="24.20" fill="none" stroke="#ececec" stroke-width="1.8"/>
<text x="1028.45" y="461.00" font-size="16.5" fill="#f2f2f2" text-anchor="middle" stroke="#f2f2f2" stroke-width="0.35">1000</text>
<rect x="996.60" y="474.40" width="63.70" height="24.20" fill="none" stroke="#ececec" stroke-width="1.8"/>
<text x="1028.45" y="492.00" font-size="16.5" fill="#f2f2f2" text-anchor="middle" stroke="#f2f2f2" stroke-width="0.35">2.515</text>
<rect x="996.60" y="504.60" width="63.70" height="24.20" fill="none" stroke="#ececec" stroke-width="1.8"/>
<text x="1028.45" y="522.50" font-size="16.5" fill="#f2f2f2" text-anchor="middle" stroke="#f2f2f2" stroke-width="0.35">0.0</text>
<text x="1102.70" y="425.50" font-size="23" fill="#eeeeee" text-anchor="middle" stroke="#eeeeee" stroke-width="0.15">7</text>
<rect x="1101.60" y="438.50" width="4.80" height="76.50" fill="#ffffff"/>
<rect x="1101.60" y="515.00" width="4.80" height="76.00" fill="#1fa81f"/>
<rect x="1088.25" y="504.50" width="31.50" height="21.00" rx="3" fill="url(#thumb)"/>
<rect x="1092.25" y="513.70" width="23.50" height="2.00" fill="#a3adb1"/>
<rect x="1097.75" y="605.25" width="12.50" height="7.00" fill="none" stroke="#e8e8e8" stroke-width="1.5"/>
<rect x="1128.60" y="444.20" width="63.70" height="24.20" fill="none" stroke="#ececec" stroke-width="1.8"/>
<text x="1160.45" y="461.00" font-size="16.5" fill="#f2f2f2" text-anchor="middle" stroke="#f2f2f2" stroke-width="0.35">2000</text>
<rect x="1128.60" y="474.40" width="63.70" height="24.20" fill="none" stroke="#ececec" stroke-width="1.8"/>
<text x="1160.45" y="492.00" font-size="16.5" fill="#f2f2f2" text-anchor="middle" stroke="#f2f2f2" stroke-width="0.35">2.515</text>
<rect x="1128.60" y="504.60" width="63.70" height="24.20" fill="none" stroke="#ececec" stroke-width="1.8"/>
<text x="1160.45" y="522.50" font-size="16.5" fill="#f2f2f2" text-anchor="middle" stroke="#f2f2f2" stroke-width="0.35">0.0</text>
<text x="1237.20" y="425.50" font-size="23" fill="#eeeeee" text-anchor="middle" stroke="#eeeeee" stroke-width="0.15">8</text>
<rect x="1235.30" y="438.50" width="4.80" height="76.50" fill="#ffffff"/>
<rect x="1235.30" y="515.00" width="4.80" height="76.00" fill="#1fa81f"/>
<rect x="1221.95" y="504.50" width="31.50" height="21.00" rx="3" fill="url(#thumb)"/>
<rect x="1225.95" y="513.70" width="23.50" height="2.00" fill="#a3adb1"/>
<rect x="1231.45" y="605.25" width="12.50" height="7.00" fill="none" stroke="#e8e8e8" stroke-width="1.5"/>
<rect x="1262.00" y="444.20" width="63.70" height="24.20" fill="none" stroke="#ececec" stroke-width="1.8"/>
<text x="1293.85" y="461.00" font-size="16.5" fill="#f2f2f2" text-anchor="middle" stroke="#f2f2f2" stroke-width="0.35">4000</text>
<rect x="1262.00" y="474.40" width="63.70" height="24.20" fill="none" stroke="#ececec" stroke-width="1.8"/>
<text x="1293.85" y="492.00" font-size="16.5" fill="#f2f2f2" text-anchor="middle" stroke="#f2f2f2" stroke-width="0.35">2.515</text>
<rect x="1262.00" y="504.60" width="63.70" height="24.20" fill="none" stroke="#ececec" stroke-width="1.8"/>
<text x="1293.85" y="522.50" font-size="16.5" fill="#f2f2f2" text-anchor="middle" stroke="#f2f2f2" stroke-width="0.35">0.0</text>
<text x="1371.00" y="425.50" font-size="23" fill="#eeeeee" text-anchor="middle" stroke="#eeeeee" stroke-width="0.15">9</text>
<rect x="1367.60" y="438.50" width="4.80" height="76.50" fill="#ffffff"/>
<rect x="1367.60" y="515.00" width="4.80" height="76.00" fill="#1fa81f"/>
<rect x="1354.25" y="504.50" width="31.50" height="21.00" rx="3" fill="url(#thumb)"/>
<rect x="1358.25" y="513.70" width="23.50" height="2.00" fill="#a3adb1"/>
<rect x="1363.75" y="605.25" width="12.50" height="7.00" fill="none" stroke="#e8e8e8" stroke-width="1.5"/>
<rect x="1395.90" y="444.20" width="63.70" height="24.20" fill="none" stroke="#ececec" stroke-width="1.8"/>
<text x="1427.75" y="461.00" font-size="16.5" fill="#f2f2f2" text-anchor="middle" stroke="#f2f2f2" stroke-width="0.35">8000</text>
<rect x="1395.90" y="474.40" width="63.70" height="24.20" fill="none" stroke="#ececec" stroke-width="1.8"/>
<text x="1427.75" y="492.00" font-size="16.5" fill="#f2f2f2" text-anchor="middle" stroke="#f2f2f2" stroke-width="0.35">2.515</text>
<rect x="1395.90" y="504.60" width="63.70" height="24.20" fill="none" stroke="#ececec" stroke-width="1.8"/>
<text x="1427.75" y="522.50" font-size="16.5" fill="#f2f2f2" text-anchor="middle" stroke="#f2f2f2" stroke-width="0.35">0.0</text>
<text x="1489.70" y="425.50" font-size="23" fill="#eeeeee" text-anchor="middle" stroke="#eeeeee" stroke-width="0.15">10</text>
<rect x="1492.10" y="438.50" width="4.80" height="76.50" fill="#ffffff"/>
<rect x="1492.10" y="515.00" width="4.80" height="76.00" fill="#1fa81f"/>
<rect x="1478.75" y="504.50" width="31.50" height="21.00" rx="3" fill="url(#thumb)"/>
<rect x="1482.75" y="513.70" width="23.50" height="2.00" fill="#a3adb1"/>
<rect x="1488.25" y="605.25" width="12.50" height="7.00" fill="none" stroke="#e8e8e8" stroke-width="1.5"/>
<rect x="1521.90" y="444.20" width="63.70" height="24.20" fill="none" stroke="#ececec" stroke-width="1.8"/>
<text x="1553.75" y="461.00" font-size="16.5" fill="#f2f2f2" text-anchor="middle" stroke="#f2f2f2" stroke-width="0.35">16000</text>
<rect x="1521.90" y="474.40" width="63.70" height="24.20" fill="none" stroke="#ececec" stroke-width="1.8"/>
<text x="1553.75" y="492.00" font-size="16.5" fill="#f2f2f2" text-anchor="middle" stroke="#f2f2f2" stroke-width="0.35">2.515</text>
<rect x="1521.90" y="504.60" width="63.70" height="24.20" fill="none" stroke="#ececec" stroke-width="1.8"/>
<text x="1553.75" y="522.50" font-size="16.5" fill="#f2f2f2" text-anchor="middle" stroke="#f2f2f2" stroke-width="0.35">0.0</text>
<rect x="353.60" y="538.00" width="47.50" height="23.50" fill="#26c01a"/>
<text x="377.35" y="555.50" font-size="17.5" fill="#ffffff" text-anchor="middle" stroke="#ffffff" stroke-width="0.35">PEQ</text>
<rect x="354.50" y="570.40" width="45.70" height="21.20" fill="none" stroke="#ececec" stroke-width="1.8"/>
<text x="377.35" y="588.70" font-size="18" fill="#f2f2f2" text-anchor="middle" stroke="#f2f2f2" stroke-width="0.35">LS</text>
<rect x="1521.90" y="538.00" width="47.50" height="23.50" fill="#26c01a"/>
<text x="1545.65" y="555.50" font-size="17.5" fill="#ffffff" text-anchor="middle" stroke="#ffffff" stroke-width="0.35">PEQ</text>
<rect x="1522.80" y="570.40" width="45.70" height="21.20" fill="none" stroke="#ececec" stroke-width="1.8"/>
<text x="1545.65" y="588.70" font-size="18" fill="#f2f2f2" text-anchor="middle" stroke="#f2f2f2" stroke-width="0.35">HS</text>
<rect x="5.00" y="639.50" width="1470.00" height="320.00" fill="#585858"/>
<rect x="18.00" y="646.70" width="125.70" height="90.40" fill="#4b5ed8"/>
<text x="80.00" y="705.00" font-size="35" fill="#ffffff" text-anchor="middle" stroke="#ffffff" stroke-width="0.35">Mixer</text>
<g>
<rect x="5.00" y="756.00" width="146.00" height="1.80" fill="#1e1e1e"/>
<rect x="5.00" y="757.80" width="146.00" height="1.20" fill="#7a7a7a"/>
<rect x="151.00" y="639.50" width="1.70" height="320.00" fill="#1e1e1e"/>
<rect x="152.70" y="639.50" width="1.10" height="320.00" fill="#787878"/>
<rect x="316.00" y="639.50" width="1.70" height="320.00" fill="#1e1e1e"/>
<rect x="317.70" y="639.50" width="1.10" height="320.00" fill="#787878"/>
<rect x="481.00" y="639.50" width="1.70" height="320.00" fill="#1e1e1e"/>
<rect x="482.70" y="639.50" width="1.10" height="320.00" fill="#787878"/>
<rect x="646.00" y="639.50" width="1.70" height="320.00" fill="#1e1e1e"/>
<rect x="647.70" y="639.50" width="1.10" height="320.00" fill="#787878"/>
<rect x="811.00" y="639.50" width="1.70" height="320.00" fill="#1e1e1e"/>
<rect x="812.70" y="639.50" width="1.10" height="320.00" fill="#787878"/>
<rect x="976.00" y="639.50" width="1.70" height="320.00" fill="#1e1e1e"/>
<rect x="977.70" y="639.50" width="1.10" height="320.00" fill="#787878"/>
<rect x="1141.00" y="639.50" width="1.70" height="320.00" fill="#1e1e1e"/>
<rect x="1142.70" y="639.50" width="1.10" height="320.00" fill="#787878"/>
<rect x="1306.00" y="639.50" width="1.70" height="320.00" fill="#1e1e1e"/>
<rect x="1307.70" y="639.50" width="1.10" height="320.00" fill="#787878"/>
</g>
<text x="77.50" y="799.50" font-size="21" fill="#f2f2f2" text-anchor="middle" stroke="#f2f2f2" stroke-width="0.35">Delay unit</text>
<circle cx="59.4" cy="838.7" r="10.6" fill="#22b422"/>
<path d="M53.8,838.8 L58,843.2 L65.2,834.2" fill="none" stroke="#ffffff" stroke-width="2.6" stroke-linecap="round" stroke-linejoin="round"/>
<circle cx="59.4" cy="885.5" r="9.6" fill="none" stroke="#e8e8e8" stroke-width="1.8"/>
<circle cx="59.4" cy="932" r="9.6" fill="none" stroke="#e8e8e8" stroke-width="1.8"/>
<text x="86.00" y="844.50" font-size="19" fill="#f2f2f2" text-anchor="start" stroke="#f2f2f2" stroke-width="0.35">ms</text>
<text x="86.00" y="891.00" font-size="19" fill="#f2f2f2" text-anchor="start" stroke="#f2f2f2" stroke-width="0.35">cm</text>
<text x="86.00" y="937.50" font-size="19" fill="#f2f2f2" text-anchor="start" stroke="#f2f2f2" stroke-width="0.35">in</text>
<rect x="169.90" y="652.50" width="133.20" height="34.20" fill="none" stroke="#ececec" stroke-width="1.8"/>
<g fill="none" stroke="#f0f0f0" stroke-width="1.3" stroke-linecap="round" stroke-linejoin="round">
<path transform="translate(209.00,658.90)" d="M10.2,3.6 Q10.2,0.8 7.4,0.8 L3.6,0.8 Q0.8,0.8 0.8,3.6 L0.8,6.4 Q0.8,9 3.4,9.5 L7.6,10.3 Q10.2,10.8 10.2,13.4 L10.2,16.2 Q10.2,19 7.4,19 L3.6,19 Q0.8,19 0.8,16.2"/>
<path transform="translate(222.00,658.90)" d="M0.8,0.8 L4.3,19 L8,3.8 L11.7,19 L15.2,0.8"/>
<path transform="translate(241.00,658.90)" d="M0.8,8.4 L10,8.4"/>
<path transform="translate(257.00,658.90)" d="M0.8,0.8 L0.8,19 L7.2,19"/>
</g>
<text x="203.00" y="720.30" font-size="16" fill="#f2f2f2" text-anchor="middle" stroke="#f2f2f2" stroke-width="0.35">-10.0dB</text>
<text x="278.80" y="718.00" font-size="15" fill="#f2f2f2" text-anchor="middle" stroke="#f2f2f2" stroke-width="0.35">Source</text>
<rect x="265.00" y="728.00" width="33.30" height="19.50" fill="#26c01a"/>
<text transform="translate(281.60,743.30) scale(0.86,1)" font-size="15.5" fill="#ffffff" text-anchor="middle" stroke="#ffffff" stroke-width="0.35">IN1</text>
<rect x="265.80" y="760.30" width="31.70" height="17.90" fill="none" stroke="#ececec" stroke-width="1.6"/>
<text transform="translate(281.60,774.80) scale(0.86,1)" font-size="15.5" fill="#ffffff" text-anchor="middle" stroke="#ffffff" stroke-width="0.35">IN2</text>
<rect x="265.80" y="791.80" width="31.70" height="17.90" fill="none" stroke="#ececec" stroke-width="1.6"/>
<text transform="translate(281.60,806.30) scale(0.86,1)" font-size="15.5" fill="#ffffff" text-anchor="middle" stroke="#ffffff" stroke-width="0.35">IN3</text>
<rect x="265.80" y="823.30" width="31.70" height="17.90" fill="none" stroke="#ececec" stroke-width="1.6"/>
<text transform="translate(281.60,837.80) scale(0.86,1)" font-size="15.5" fill="#ffffff" text-anchor="middle" stroke="#ffffff" stroke-width="0.35">IN4</text>
<rect x="197.55" y="749.00" width="4.50" height="102.00" fill="#ffffff"/>
<rect x="184.30" y="753.30" width="31.00" height="21.00" rx="3" fill="url(#thumb)"/>
<rect x="188.30" y="762.50" width="23.00" height="2.00" fill="#a3adb1"/>
<text x="269.70" y="876.00" font-size="15" fill="#f2f2f2" text-anchor="middle" stroke="#f2f2f2" stroke-width="0.35">Delay</text>
<rect x="171.60" y="882.20" width="52.20" height="25.00" fill="none" stroke="#ececec" stroke-width="1.8"/>
<g transform="translate(170.70,881.30)" fill="none" stroke="#e0e0e0" stroke-width="1.6" stroke-linejoin="round">
<path d="M16.5,10.2 L18.8,10.2 L25.8,6 L25.8,21 L18.8,16.8 L16.5,16.8 Z"/>
<path d="M29,9.5 Q31.4,13.5 29,17.8"/>
<path d="M31,7.2 Q34.8,13.5 31,19.8"/>
<path d="M33,4.6 Q38.6,13.5 33,22.4"/>
</g>
<rect x="243.20" y="882.90" width="52.60" height="25.00" fill="none" stroke="#ececec" stroke-width="1.8"/>
<text transform="translate(269.50,899.50) scale(0.95,1)" font-size="14" fill="#f2f2f2" text-anchor="middle" stroke="#f2f2f2" stroke-width="0.35">4.0000</text>
<rect x="171.60" y="918.20" width="52.20" height="24.70" fill="none" stroke="#2db52d" stroke-width="1.8"/>
<text x="197.70" y="938.00" font-size="18" fill="#2db52d" text-anchor="middle" stroke="#2db52d" stroke-width="0.35">180°</text>
<rect x="243.20" y="918.20" width="52.60" height="24.70" fill="none" stroke="#e8843e" stroke-width="1.8"/>
<text x="269.50" y="937.20" font-size="18.5" fill="#e8843e" text-anchor="middle" stroke="#e8843e" stroke-width="0.7">Link</text>
<rect x="334.90" y="652.50" width="133.20" height="34.20" fill="none" stroke="#ececec" stroke-width="1.8"/>
<g fill="none" stroke="#f0f0f0" stroke-width="1.3" stroke-linecap="round" stroke-linejoin="round">
<path transform="translate(373.00,658.90)" d="M10.2,3.6 Q10.2,0.8 7.4,0.8 L3.6,0.8 Q0.8,0.8 0.8,3.6 L0.8,6.4 Q0.8,9 3.4,9.5 L7.6,10.3 Q10.2,10.8 10.2,13.4 L10.2,16.2 Q10.2,19 7.4,19 L3.6,19 Q0.8,19 0.8,16.2"/>
<path transform="translate(386.00,658.90)" d="M0.8,0.8 L4.3,19 L8,3.8 L11.7,19 L15.2,0.8"/>
<path transform="translate(405.00,658.90)" d="M0.8,8.4 L10,8.4"/>
<path transform="translate(421.00,658.90)" d="M0.8,19 L0.8,0.8 L6,0.8 Q8.8,0.8 8.8,3.6 L8.8,6.9 Q8.8,9.7 6,9.7 L0.8,9.7 M5,9.7 L9,19"/>
</g>
<text x="368.00" y="720.30" font-size="16" fill="#f2f2f2" text-anchor="middle" stroke="#f2f2f2" stroke-width="0.35">-10.0dB</text>
<text x="443.80" y="718.00" font-size="15" fill="#f2f2f2" text-anchor="middle" stroke="#f2f2f2" stroke-width="0.35">Source</text>
<rect x="430.80" y="728.80" width="31.70" height="17.90" fill="none" stroke="#ececec" stroke-width="1.6"/>
<text transform="translate(446.60,743.30) scale(0.86,1)" font-size="15.5" fill="#ffffff" text-anchor="middle" stroke="#ffffff" stroke-width="0.35">IN1</text>
<rect x="430.00" y="759.50" width="33.30" height="19.50" fill="#26c01a"/>
<text transform="translate(446.60,774.80) scale(0.86,1)" font-size="15.5" fill="#ffffff" text-anchor="middle" stroke="#ffffff" stroke-width="0.35">IN2</text>
<rect x="430.80" y="791.80" width="31.70" height="17.90" fill="none" stroke="#ececec" stroke-width="1.6"/>
<text transform="translate(446.60,806.30) scale(0.86,1)" font-size="15.5" fill="#ffffff" text-anchor="middle" stroke="#ffffff" stroke-width="0.35">IN3</text>
<rect x="430.80" y="823.30" width="31.70" height="17.90" fill="none" stroke="#ececec" stroke-width="1.6"/>
<text transform="translate(446.60,837.80) scale(0.86,1)" font-size="15.5" fill="#ffffff" text-anchor="middle" stroke="#ffffff" stroke-width="0.35">IN4</text>
<rect x="362.55" y="749.00" width="4.50" height="102.00" fill="#ffffff"/>
<rect x="349.30" y="753.30" width="31.00" height="21.00" rx="3" fill="url(#thumb)"/>
<rect x="353.30" y="762.50" width="23.00" height="2.00" fill="#a3adb1"/>
<text x="434.70" y="876.00" font-size="15" fill="#f2f2f2" text-anchor="middle" stroke="#f2f2f2" stroke-width="0.35">Delay</text>
<rect x="336.60" y="882.20" width="52.20" height="25.00" fill="none" stroke="#ececec" stroke-width="1.8"/>
<g transform="translate(335.70,881.30)" fill="none" stroke="#e0e0e0" stroke-width="1.6" stroke-linejoin="round">
<path d="M16.5,10.2 L18.8,10.2 L25.8,6 L25.8,21 L18.8,16.8 L16.5,16.8 Z"/>
<path d="M29,9.5 Q31.4,13.5 29,17.8"/>
<path d="M31,7.2 Q34.8,13.5 31,19.8"/>
<path d="M33,4.6 Q38.6,13.5 33,22.4"/>
</g>
<rect x="408.20" y="882.90" width="52.60" height="25.00" fill="none" stroke="#ececec" stroke-width="1.8"/>
<text transform="translate(434.50,899.50) scale(0.95,1)" font-size="14" fill="#f2f2f2" text-anchor="middle" stroke="#f2f2f2" stroke-width="0.35">4.0000</text>
<rect x="336.60" y="918.20" width="52.20" height="24.70" fill="none" stroke="#2db52d" stroke-width="1.8"/>
<text x="362.70" y="938.00" font-size="18" fill="#2db52d" text-anchor="middle" stroke="#2db52d" stroke-width="0.35">180°</text>
<rect x="408.20" y="918.20" width="52.60" height="24.70" fill="none" stroke="#e8843e" stroke-width="1.8"/>
<text x="434.50" y="937.20" font-size="18.5" fill="#e8843e" text-anchor="middle" stroke="#e8843e" stroke-width="0.7">Link</text>
<rect x="485.10" y="643.90" width="159.00" height="313.00" fill="none" stroke="#2fa83a" stroke-width="1.8"/>
<rect x="499.00" y="651.60" width="135.00" height="36.00" fill="#26c01a"/>
<g fill="none" stroke="#e4ffdc" stroke-width="1.3" stroke-linecap="round" stroke-linejoin="round">
<path transform="translate(530.00,658.90)" d="M0.8,0.8 L7,0.8 Q9.8,0.8 9.8,3.6 L9.8,6.7 Q9.8,9.5 7,9.5 L0.8,9.5 M7,9.5 Q10.4,9.5 10.4,12.3 L10.4,16.2 Q10.4,19 7.6,19 L0.8,19 L0.8,0.8"/>
<path transform="translate(544.00,658.90)" d="M1.2,5.9 L6.2,5.9 Q8.2,5.9 8.2,7.9 L8.2,19 M8.2,12 L2.8,12 Q0.8,12 0.8,14 L0.8,17 Q0.8,19 2.8,19 L6,19 Q8.2,19 8.2,16.8"/>
<path transform="translate(554.70,658.90)" d="M9.2,7.6 L7.5,5.9 L2.6,5.9 L0.8,7.7 L0.8,10 L2.6,11.8 L7.4,13.1 L9.2,14.9 L9.2,17.2 L7.4,19 L2.6,19 L0.8,17.2"/>
<path transform="translate(564.70,658.90)" d="M9.2,7.6 L7.5,5.9 L2.6,5.9 L0.8,7.7 L0.8,10 L2.6,11.8 L7.4,13.1 L9.2,14.9 L9.2,17.2 L7.4,19 L2.6,19 L0.8,17.2"/>
<path transform="translate(578.00,658.90)" d="M0.8,8.4 L10,8.4"/>
<path transform="translate(594.70,658.90)" d="M0.8,0.8 L0.8,19 L7.2,19"/>
</g>
<text x="533.00" y="720.30" font-size="16" fill="#f2f2f2" text-anchor="middle" stroke="#f2f2f2" stroke-width="0.35">-3.0dB</text>
<text x="608.80" y="718.00" font-size="15" fill="#f2f2f2" text-anchor="middle" stroke="#f2f2f2" stroke-width="0.35">Source</text>
<rect x="595.00" y="728.00" width="33.30" height="19.50" fill="#26c01a"/>
<text transform="translate(611.60,743.30) scale(0.86,1)" font-size="15.5" fill="#ffffff" text-anchor="middle" stroke="#ffffff" stroke-width="0.35">IN1</text>
<rect x="595.80" y="760.30" width="31.70" height="17.90" fill="none" stroke="#ececec" stroke-width="1.6"/>
<text transform="translate(611.60,774.80) scale(0.86,1)" font-size="15.5" fill="#ffffff" text-anchor="middle" stroke="#ffffff" stroke-width="0.35">IN2</text>
<rect x="595.80" y="791.80" width="31.70" height="17.90" fill="none" stroke="#ececec" stroke-width="1.6"/>
<text transform="translate(611.60,806.30) scale(0.86,1)" font-size="15.5" fill="#ffffff" text-anchor="middle" stroke="#ffffff" stroke-width="0.35">IN3</text>
<rect x="595.80" y="823.30" width="31.70" height="17.90" fill="none" stroke="#ececec" stroke-width="1.6"/>
<text transform="translate(611.60,837.80) scale(0.86,1)" font-size="15.5" fill="#ffffff" text-anchor="middle" stroke="#ffffff" stroke-width="0.35">IN4</text>
<rect x="527.55" y="749.00" width="4.50" height="102.00" fill="#ffffff"/>
<rect x="514.30" y="741.50" width="31.00" height="21.00" rx="3" fill="url(#thumb)"/>
<rect x="518.30" y="750.70" width="23.00" height="2.00" fill="#a3adb1"/>
<text x="599.70" y="876.00" font-size="15" fill="#f2f2f2" text-anchor="middle" stroke="#f2f2f2" stroke-width="0.35">Delay</text>
<rect x="501.60" y="882.20" width="52.20" height="25.00" fill="none" stroke="#ececec" stroke-width="1.8"/>
<g transform="translate(500.70,881.30)" fill="none" stroke="#e0e0e0" stroke-width="1.6" stroke-linejoin="round">
<path d="M16.5,10.2 L18.8,10.2 L25.8,6 L25.8,21 L18.8,16.8 L16.5,16.8 Z"/>
<path d="M29,9.5 Q31.4,13.5 29,17.8"/>
<path d="M31,7.2 Q34.8,13.5 31,19.8"/>
<path d="M33,4.6 Q38.6,13.5 33,22.4"/>
</g>
<rect x="573.20" y="882.90" width="52.60" height="25.00" fill="none" stroke="#ececec" stroke-width="1.8"/>
<rect x="501.60" y="918.20" width="52.20" height="24.70" fill="none" stroke="#f2f2f2" stroke-width="1.8"/>
<text x="527.70" y="938.00" font-size="18" fill="#f2f2f2" text-anchor="middle" stroke="#f2f2f2" stroke-width="0.35">0°</text>
<rect x="573.20" y="918.20" width="52.60" height="24.70" fill="none" stroke="#4aa0e6" stroke-width="1.8"/>
<text x="599.50" y="937.20" font-size="18.5" fill="#4aa0e6" text-anchor="middle" stroke="#4aa0e6" stroke-width="0.7">Link</text>
<rect x="664.00" y="651.60" width="135.00" height="36.00" fill="#26c01a"/>
<g fill="none" stroke="#e4ffdc" stroke-width="1.3" stroke-linecap="round" stroke-linejoin="round">
<path transform="translate(695.00,658.90)" d="M0.8,0.8 L7,0.8 Q9.8,0.8 9.8,3.6 L9.8,6.7 Q9.8,9.5 7,9.5 L0.8,9.5 M7,9.5 Q10.4,9.5 10.4,12.3 L10.4,16.2 Q10.4,19 7.6,19 L0.8,19 L0.8,0.8"/>
<path transform="translate(709.00,658.90)" d="M1.2,5.9 L6.2,5.9 Q8.2,5.9 8.2,7.9 L8.2,19 M8.2,12 L2.8,12 Q0.8,12 0.8,14 L0.8,17 Q0.8,19 2.8,19 L6,19 Q8.2,19 8.2,16.8"/>
<path transform="translate(719.70,658.90)" d="M9.2,7.6 L7.5,5.9 L2.6,5.9 L0.8,7.7 L0.8,10 L2.6,11.8 L7.4,13.1 L9.2,14.9 L9.2,17.2 L7.4,19 L2.6,19 L0.8,17.2"/>
<path transform="translate(729.70,658.90)" d="M9.2,7.6 L7.5,5.9 L2.6,5.9 L0.8,7.7 L0.8,10 L2.6,11.8 L7.4,13.1 L9.2,14.9 L9.2,17.2 L7.4,19 L2.6,19 L0.8,17.2"/>
<path transform="translate(743.00,658.90)" d="M0.8,8.4 L10,8.4"/>
<path transform="translate(759.20,658.90)" d="M0.8,19 L0.8,0.8 L6,0.8 Q8.8,0.8 8.8,3.6 L8.8,6.9 Q8.8,9.7 6,9.7 L0.8,9.7 M5,9.7 L9,19"/>
</g>
<text x="698.00" y="720.30" font-size="16" fill="#f2f2f2" text-anchor="middle" stroke="#f2f2f2" stroke-width="0.35">-3.0dB</text>
<text x="773.80" y="718.00" font-size="15" fill="#f2f2f2" text-anchor="middle" stroke="#f2f2f2" stroke-width="0.35">Source</text>
<rect x="760.80" y="728.80" width="31.70" height="17.90" fill="none" stroke="#ececec" stroke-width="1.6"/>
<text transform="translate(776.60,743.30) scale(0.86,1)" font-size="15.5" fill="#ffffff" text-anchor="middle" stroke="#ffffff" stroke-width="0.35">IN1</text>
<rect x="760.00" y="759.50" width="33.30" height="19.50" fill="#26c01a"/>
<text transform="translate(776.60,774.80) scale(0.86,1)" font-size="15.5" fill="#ffffff" text-anchor="middle" stroke="#ffffff" stroke-width="0.35">IN2</text>
<rect x="760.80" y="791.80" width="31.70" height="17.90" fill="none" stroke="#ececec" stroke-width="1.6"/>
<text transform="translate(776.60,806.30) scale(0.86,1)" font-size="15.5" fill="#ffffff" text-anchor="middle" stroke="#ffffff" stroke-width="0.35">IN3</text>
<rect x="760.80" y="823.30" width="31.70" height="17.90" fill="none" stroke="#ececec" stroke-width="1.6"/>
<text transform="translate(776.60,837.80) scale(0.86,1)" font-size="15.5" fill="#ffffff" text-anchor="middle" stroke="#ffffff" stroke-width="0.35">IN4</text>
<rect x="692.55" y="749.00" width="4.50" height="102.00" fill="#ffffff"/>
<rect x="679.30" y="741.50" width="31.00" height="21.00" rx="3" fill="url(#thumb)"/>
<rect x="683.30" y="750.70" width="23.00" height="2.00" fill="#a3adb1"/>
<text x="764.70" y="876.00" font-size="15" fill="#f2f2f2" text-anchor="middle" stroke="#f2f2f2" stroke-width="0.35">Delay</text>
<rect x="666.60" y="882.20" width="52.20" height="25.00" fill="none" stroke="#ececec" stroke-width="1.8"/>
<g transform="translate(665.70,881.30)" fill="none" stroke="#e0e0e0" stroke-width="1.6" stroke-linejoin="round">
<path d="M16.5,10.2 L18.8,10.2 L25.8,6 L25.8,21 L18.8,16.8 L16.5,16.8 Z"/>
<path d="M29,9.5 Q31.4,13.5 29,17.8"/>
<path d="M31,7.2 Q34.8,13.5 31,19.8"/>
<path d="M33,4.6 Q38.6,13.5 33,22.4"/>
</g>
<rect x="738.20" y="882.90" width="52.60" height="25.00" fill="none" stroke="#ececec" stroke-width="1.8"/>
<rect x="666.60" y="918.20" width="52.20" height="24.70" fill="none" stroke="#f2f2f2" stroke-width="1.8"/>
<text x="692.70" y="938.00" font-size="18" fill="#f2f2f2" text-anchor="middle" stroke="#f2f2f2" stroke-width="0.35">0°</text>
<rect x="738.20" y="918.20" width="52.60" height="24.70" fill="none" stroke="#4aa0e6" stroke-width="1.8"/>
<text x="764.50" y="937.20" font-size="18.5" fill="#4aa0e6" text-anchor="middle" stroke="#4aa0e6" stroke-width="0.7">Link</text>
<rect x="829.90" y="652.50" width="133.20" height="34.20" fill="none" stroke="#ececec" stroke-width="1.8"/>
<g fill="none" stroke="#f0f0f0" stroke-width="1.3" stroke-linecap="round" stroke-linejoin="round">
<path transform="translate(863.20,658.90)" d="M0.8,0.8 L0.8,19 M10,0.8 L10,19 M0.8,9.7 L10,9.7"/>
<path transform="translate(879.20,658.90)" d="M0.8,6 L0.8,19 M0.8,0.9 L0.8,2.8"/>
<path transform="translate(882.90,658.90)" d="M7.6,5.9 L7.6,21.6 Q7.6,23.6 5.6,23.6 L2.8,23.6 Q0.8,23.6 0.8,21.8 M7.6,5.9 L2.8,5.9 Q0.8,5.9 0.8,7.9 L0.8,15 Q0.8,17 2.8,17 L7.6,17"/>
<path transform="translate(895.00,658.90)" d="M0.8,0.8 L0.8,19 M0.8,5.9 L6.2,5.9 Q8.2,5.9 8.2,7.9 L8.2,19"/>
<path transform="translate(908.20,658.90)" d="M0.8,8.4 L10,8.4"/>
<path transform="translate(925.00,658.90)" d="M0.8,0.8 L0.8,19 L7.2,19"/>
</g>
<text x="863.00" y="720.30" font-size="16" fill="#f2f2f2" text-anchor="middle" stroke="#f2f2f2" stroke-width="0.35">-3.0dB</text>
<text x="938.80" y="718.00" font-size="15" fill="#f2f2f2" text-anchor="middle" stroke="#f2f2f2" stroke-width="0.35">Source</text>
<rect x="925.00" y="728.00" width="33.30" height="19.50" fill="#26c01a"/>
<text transform="translate(941.60,743.30) scale(0.86,1)" font-size="15.5" fill="#ffffff" text-anchor="middle" stroke="#ffffff" stroke-width="0.35">IN1</text>
<rect x="925.80" y="760.30" width="31.70" height="17.90" fill="none" stroke="#ececec" stroke-width="1.6"/>
<text transform="translate(941.60,774.80) scale(0.86,1)" font-size="15.5" fill="#ffffff" text-anchor="middle" stroke="#ffffff" stroke-width="0.35">IN2</text>
<rect x="925.80" y="791.80" width="31.70" height="17.90" fill="none" stroke="#ececec" stroke-width="1.6"/>
<text transform="translate(941.60,806.30) scale(0.86,1)" font-size="15.5" fill="#ffffff" text-anchor="middle" stroke="#ffffff" stroke-width="0.35">IN3</text>
<rect x="925.80" y="823.30" width="31.70" height="17.90" fill="none" stroke="#ececec" stroke-width="1.6"/>
<text transform="translate(941.60,837.80) scale(0.86,1)" font-size="15.5" fill="#ffffff" text-anchor="middle" stroke="#ffffff" stroke-width="0.35">IN4</text>
<rect x="857.55" y="749.00" width="4.50" height="102.00" fill="#ffffff"/>
<rect x="844.30" y="741.50" width="31.00" height="21.00" rx="3" fill="url(#thumb)"/>
<rect x="848.30" y="750.70" width="23.00" height="2.00" fill="#a3adb1"/>
<text x="929.70" y="876.00" font-size="15" fill="#f2f2f2" text-anchor="middle" stroke="#f2f2f2" stroke-width="0.35">Delay</text>
<rect x="831.60" y="882.20" width="52.20" height="25.00" fill="none" stroke="#ececec" stroke-width="1.8"/>
<g transform="translate(830.70,881.30)" fill="none" stroke="#e0e0e0" stroke-width="1.6" stroke-linejoin="round">
<path d="M16.5,10.2 L18.8,10.2 L25.8,6 L25.8,21 L18.8,16.8 L16.5,16.8 Z"/>
<path d="M29,9.5 Q31.4,13.5 29,17.8"/>
<path d="M31,7.2 Q34.8,13.5 31,19.8"/>
<path d="M33,4.6 Q38.6,13.5 33,22.4"/>
</g>
<rect x="903.20" y="882.90" width="52.60" height="25.00" fill="none" stroke="#ececec" stroke-width="1.8"/>
<text transform="translate(929.50,899.50) scale(0.95,1)" font-size="14" fill="#f2f2f2" text-anchor="middle" stroke="#f2f2f2" stroke-width="0.35">0.1875</text>
<rect x="831.60" y="918.20" width="52.20" height="24.70" fill="none" stroke="#f2f2f2" stroke-width="1.8"/>
<text x="857.70" y="938.00" font-size="18" fill="#f2f2f2" text-anchor="middle" stroke="#f2f2f2" stroke-width="0.35">0°</text>
<rect x="903.20" y="918.20" width="52.60" height="24.70" fill="none" stroke="#b64fd8" stroke-width="1.8"/>
<text x="929.50" y="937.20" font-size="18.5" fill="#b64fd8" text-anchor="middle" stroke="#b64fd8" stroke-width="0.7">Link</text>
<rect x="994.90" y="652.50" width="133.20" height="34.20" fill="none" stroke="#ececec" stroke-width="1.8"/>
<g fill="none" stroke="#f0f0f0" stroke-width="1.3" stroke-linecap="round" stroke-linejoin="round">
<path transform="translate(1028.20,658.90)" d="M0.8,0.8 L0.8,19 M10,0.8 L10,19 M0.8,9.7 L10,9.7"/>
<path transform="translate(1044.20,658.90)" d="M0.8,6 L0.8,19 M0.8,0.9 L0.8,2.8"/>
<path transform="translate(1047.90,658.90)" d="M7.6,5.9 L7.6,21.6 Q7.6,23.6 5.6,23.6 L2.8,23.6 Q0.8,23.6 0.8,21.8 M7.6,5.9 L2.8,5.9 Q0.8,5.9 0.8,7.9 L0.8,15 Q0.8,17 2.8,17 L7.6,17"/>
<path transform="translate(1060.00,658.90)" d="M0.8,0.8 L0.8,19 M0.8,5.9 L6.2,5.9 Q8.2,5.9 8.2,7.9 L8.2,19"/>
<path transform="translate(1073.20,658.90)" d="M0.8,8.4 L10,8.4"/>
<path transform="translate(1090.00,658.90)" d="M0.8,19 L0.8,0.8 L6,0.8 Q8.8,0.8 8.8,3.6 L8.8,6.9 Q8.8,9.7 6,9.7 L0.8,9.7 M5,9.7 L9,19"/>
</g>
<text x="1028.00" y="720.30" font-size="16" fill="#f2f2f2" text-anchor="middle" stroke="#f2f2f2" stroke-width="0.35">-3.0dB</text>
<text x="1103.80" y="718.00" font-size="15" fill="#f2f2f2" text-anchor="middle" stroke="#f2f2f2" stroke-width="0.35">Source</text>
<rect x="1090.80" y="728.80" width="31.70" height="17.90" fill="none" stroke="#ececec" stroke-width="1.6"/>
<text transform="translate(1106.60,743.30) scale(0.86,1)" font-size="15.5" fill="#ffffff" text-anchor="middle" stroke="#ffffff" stroke-width="0.35">IN1</text>
<rect x="1090.00" y="759.50" width="33.30" height="19.50" fill="#26c01a"/>
<text transform="translate(1106.60,774.80) scale(0.86,1)" font-size="15.5" fill="#ffffff" text-anchor="middle" stroke="#ffffff" stroke-width="0.35">IN2</text>
<rect x="1090.80" y="791.80" width="31.70" height="17.90" fill="none" stroke="#ececec" stroke-width="1.6"/>
<text transform="translate(1106.60,806.30) scale(0.86,1)" font-size="15.5" fill="#ffffff" text-anchor="middle" stroke="#ffffff" stroke-width="0.35">IN3</text>
<rect x="1090.80" y="823.30" width="31.70" height="17.90" fill="none" stroke="#ececec" stroke-width="1.6"/>
<text transform="translate(1106.60,837.80) scale(0.86,1)" font-size="15.5" fill="#ffffff" text-anchor="middle" stroke="#ffffff" stroke-width="0.35">IN4</text>
<rect x="1022.55" y="749.00" width="4.50" height="102.00" fill="#ffffff"/>
<rect x="1009.30" y="741.50" width="31.00" height="21.00" rx="3" fill="url(#thumb)"/>
<rect x="1013.30" y="750.70" width="23.00" height="2.00" fill="#a3adb1"/>
<text x="1094.70" y="876.00" font-size="15" fill="#f2f2f2" text-anchor="middle" stroke="#f2f2f2" stroke-width="0.35">Delay</text>
<rect x="996.60" y="882.20" width="52.20" height="25.00" fill="none" stroke="#ececec" stroke-width="1.8"/>
<g transform="translate(995.70,881.30)" fill="none" stroke="#e0e0e0" stroke-width="1.6" stroke-linejoin="round">
<path d="M16.5,10.2 L18.8,10.2 L25.8,6 L25.8,21 L18.8,16.8 L16.5,16.8 Z"/>
<path d="M29,9.5 Q31.4,13.5 29,17.8"/>
<path d="M31,7.2 Q34.8,13.5 31,19.8"/>
<path d="M33,4.6 Q38.6,13.5 33,22.4"/>
</g>
<rect x="1068.20" y="882.90" width="52.60" height="25.00" fill="none" stroke="#ececec" stroke-width="1.8"/>
<text transform="translate(1094.50,899.50) scale(0.95,1)" font-size="14" fill="#f2f2f2" text-anchor="middle" stroke="#f2f2f2" stroke-width="0.35">0.1875</text>
<rect x="996.60" y="918.20" width="52.20" height="24.70" fill="none" stroke="#f2f2f2" stroke-width="1.8"/>
<text x="1022.70" y="938.00" font-size="18" fill="#f2f2f2" text-anchor="middle" stroke="#f2f2f2" stroke-width="0.35">0°</text>
<rect x="1068.20" y="918.20" width="52.60" height="24.70" fill="none" stroke="#b64fd8" stroke-width="1.8"/>
<text x="1094.50" y="937.20" font-size="18.5" fill="#b64fd8" text-anchor="middle" stroke="#b64fd8" stroke-width="0.7">Link</text>
<rect x="1159.90" y="652.50" width="133.20" height="34.20" fill="none" stroke="#ececec" stroke-width="1.8"/>
<g fill="none" stroke="#f0f0f0" stroke-width="1.3" stroke-linecap="round" stroke-linejoin="round">
<path transform="translate(1208.00,658.90)" d="M0.8,19 L0.8,5.9 L6.6,5.9 Q8.7,5.9 8.7,8 L8.7,19"/>
<path transform="translate(1220.30,658.90)" d="M3,5.9 L7.6,5.9 L9.8,8.1 L9.8,16.8 L7.6,19 L3,19 L0.8,16.8 L0.8,8.1 Z"/>
<path transform="translate(1233.80,658.90)" d="M0.8,24 L0.8,5.9 L6.2,5.9 L8.5,8.2 L8.5,16.7 L6.2,19 L0.8,19"/>
</g>
<text transform="translate(1193.00,720.30) scale(0.92,1)" font-size="15" fill="#f2f2f2" text-anchor="middle" stroke="#f2f2f2" stroke-width="0.35">OFF</text>
<text x="1268.80" y="718.00" font-size="15" fill="#f2f2f2" text-anchor="middle" stroke="#f2f2f2" stroke-width="0.35">Source</text>
<rect x="1255.80" y="728.80" width="31.70" height="17.90" fill="none" stroke="#ececec" stroke-width="1.6"/>
<text transform="translate(1271.60,743.30) scale(0.86,1)" font-size="15.5" fill="#ffffff" text-anchor="middle" stroke="#ffffff" stroke-width="0.35">IN1</text>
<rect x="1255.80" y="760.30" width="31.70" height="17.90" fill="none" stroke="#ececec" stroke-width="1.6"/>
<text transform="translate(1271.60,774.80) scale(0.86,1)" font-size="15.5" fill="#ffffff" text-anchor="middle" stroke="#ffffff" stroke-width="0.35">IN2</text>
<rect x="1255.80" y="791.80" width="31.70" height="17.90" fill="none" stroke="#ececec" stroke-width="1.6"/>
<text transform="translate(1271.60,806.30) scale(0.86,1)" font-size="15.5" fill="#ffffff" text-anchor="middle" stroke="#ffffff" stroke-width="0.35">IN3</text>
<rect x="1255.80" y="823.30" width="31.70" height="17.90" fill="none" stroke="#ececec" stroke-width="1.6"/>
<text transform="translate(1271.60,837.80) scale(0.86,1)" font-size="15.5" fill="#ffffff" text-anchor="middle" stroke="#ffffff" stroke-width="0.35">IN4</text>
<rect x="1187.55" y="749.00" width="4.50" height="102.00" fill="#ffffff"/>
<rect x="1174.30" y="838.30" width="31.00" height="21.00" rx="3" fill="url(#thumb)"/>
<rect x="1178.30" y="847.50" width="23.00" height="2.00" fill="#a3adb1"/>
<text x="1259.70" y="876.00" font-size="15" fill="#f2f2f2" text-anchor="middle" stroke="#f2f2f2" stroke-width="0.35">Delay</text>
<rect x="1161.40" y="881.90" width="52.20" height="25.20" fill="none" stroke="#30b432" stroke-width="1.8"/>
<g transform="translate(1160.50,881.00)" fill="none" stroke="#30b432" stroke-width="1.6" stroke-linejoin="round">
<path d="M18.6,10.6 L21.2,10.6 L29.4,5.8 L29.4,21.8 L21.2,16.6 L18.6,16.6 Z" stroke-width="1.5"/>
<path d="M32.3,11 L37.3,16.2 M37.3,11 L32.3,16.2" stroke-width="1.9"/>
</g>
<rect x="1233.20" y="882.90" width="52.60" height="25.00" fill="none" stroke="#ececec" stroke-width="1.8"/>
<rect x="1161.60" y="918.20" width="52.20" height="24.70" fill="none" stroke="#f2f2f2" stroke-width="1.8"/>
<text x="1187.70" y="938.00" font-size="18" fill="#f2f2f2" text-anchor="middle" stroke="#f2f2f2" stroke-width="0.35">0°</text>
<rect x="1233.20" y="918.20" width="52.60" height="24.70" fill="none" stroke="#d6d63c" stroke-width="1.8"/>
<text x="1259.50" y="937.20" font-size="18.5" fill="#d6d63c" text-anchor="middle" stroke="#d6d63c" stroke-width="0.7">Link</text>
<rect x="1324.90" y="652.50" width="133.20" height="34.20" fill="none" stroke="#ececec" stroke-width="1.8"/>
<g fill="none" stroke="#f0f0f0" stroke-width="1.3" stroke-linecap="round" stroke-linejoin="round">
<path transform="translate(1373.00,658.90)" d="M0.8,19 L0.8,5.9 L6.6,5.9 Q8.7,5.9 8.7,8 L8.7,19"/>
<path transform="translate(1385.30,658.90)" d="M3,5.9 L7.6,5.9 L9.8,8.1 L9.8,16.8 L7.6,19 L3,19 L0.8,16.8 L0.8,8.1 Z"/>
<path transform="translate(1398.80,658.90)" d="M0.8,24 L0.8,5.9 L6.2,5.9 L8.5,8.2 L8.5,16.7 L6.2,19 L0.8,19"/>
</g>
<text transform="translate(1358.00,720.30) scale(0.92,1)" font-size="15" fill="#f2f2f2" text-anchor="middle" stroke="#f2f2f2" stroke-width="0.35">OFF</text>
<text x="1433.80" y="718.00" font-size="15" fill="#f2f2f2" text-anchor="middle" stroke="#f2f2f2" stroke-width="0.35">Source</text>
<rect x="1420.80" y="728.80" width="31.70" height="17.90" fill="none" stroke="#ececec" stroke-width="1.6"/>
<text transform="translate(1436.60,743.30) scale(0.86,1)" font-size="15.5" fill="#ffffff" text-anchor="middle" stroke="#ffffff" stroke-width="0.35">IN1</text>
<rect x="1420.80" y="760.30" width="31.70" height="17.90" fill="none" stroke="#ececec" stroke-width="1.6"/>
<text transform="translate(1436.60,774.80) scale(0.86,1)" font-size="15.5" fill="#ffffff" text-anchor="middle" stroke="#ffffff" stroke-width="0.35">IN2</text>
<rect x="1420.80" y="791.80" width="31.70" height="17.90" fill="none" stroke="#ececec" stroke-width="1.6"/>
<text transform="translate(1436.60,806.30) scale(0.86,1)" font-size="15.5" fill="#ffffff" text-anchor="middle" stroke="#ffffff" stroke-width="0.35">IN3</text>
<rect x="1420.80" y="823.30" width="31.70" height="17.90" fill="none" stroke="#ececec" stroke-width="1.6"/>
<text transform="translate(1436.60,837.80) scale(0.86,1)" font-size="15.5" fill="#ffffff" text-anchor="middle" stroke="#ffffff" stroke-width="0.35">IN4</text>
<rect x="1352.55" y="749.00" width="4.50" height="102.00" fill="#ffffff"/>
<rect x="1339.30" y="838.30" width="31.00" height="21.00" rx="3" fill="url(#thumb)"/>
<rect x="1343.30" y="847.50" width="23.00" height="2.00" fill="#a3adb1"/>
<text x="1424.70" y="876.00" font-size="15" fill="#f2f2f2" text-anchor="middle" stroke="#f2f2f2" stroke-width="0.35">Delay</text>
<rect x="1326.40" y="881.90" width="52.20" height="25.20" fill="none" stroke="#30b432" stroke-width="1.8"/>
<g transform="translate(1325.50,881.00)" fill="none" stroke="#30b432" stroke-width="1.6" stroke-linejoin="round">
<path d="M18.6,10.6 L21.2,10.6 L29.4,5.8 L29.4,21.8 L21.2,16.6 L18.6,16.6 Z" stroke-width="1.5"/>
<path d="M32.3,11 L37.3,16.2 M37.3,11 L32.3,16.2" stroke-width="1.9"/>
</g>
<rect x="1398.20" y="882.90" width="52.60" height="25.00" fill="none" stroke="#ececec" stroke-width="1.8"/>
<rect x="1326.60" y="918.20" width="52.20" height="24.70" fill="none" stroke="#f2f2f2" stroke-width="1.8"/>
<text x="1352.70" y="938.00" font-size="18" fill="#f2f2f2" text-anchor="middle" stroke="#f2f2f2" stroke-width="0.35">0°</text>
<rect x="1398.20" y="918.20" width="52.60" height="24.70" fill="none" stroke="#d6d63c" stroke-width="1.8"/>
<text x="1424.50" y="937.20" font-size="18.5" fill="#d6d63c" text-anchor="middle" stroke="#d6d63c" stroke-width="0.7">Link</text>
<rect x="1484.50" y="639.50" width="126.50" height="320.00" fill="#585858"/>
<text x="1545.00" y="679.00" font-size="21" fill="#f2f2f2" text-anchor="middle" stroke="#f2f2f2" stroke-width="0.35">Volume</text>
<g fill="none" stroke="#f0f0f0" stroke-width="1.4" stroke-linecap="round" stroke-linejoin="round">
<path transform="translate(1526.11,694.30) scale(0.79,0.68)" vector-effect="non-scaling-stroke" d="M0.7,8.3 L10.1,8.3"/>
<path transform="translate(1537.96,694.30) scale(0.79,0.68)" vector-effect="non-scaling-stroke" d="M0.7,3.4 Q0.9,0.7 3.4,0.7 L5.6,0.7 Q8.3,0.7 8.3,3.4 L8.3,7.8 Q8.3,9.4 7,10.9 L0.7,18.7 L8.3,18.7"/>
<path transform="translate(1547.36,694.30) scale(0.79,0.68)" vector-effect="non-scaling-stroke" d="M0.7,3.4 Q0.9,0.7 3.4,0.7 L5.6,0.7 Q8.3,0.7 8.3,3.4 L8.3,7.8 Q8.3,9.4 7,10.9 L0.7,18.7 L8.3,18.7"/>
<path transform="translate(1556.76,694.30) scale(0.79,0.68)" vector-effect="non-scaling-stroke" d="M8.3,0.7 L8.3,18.7 L2.9,18.7 Q0.7,18.7 0.7,16.5 L0.7,8.3 Q0.7,6.1 2.9,6.1 L8.3,6.1"/>
<path transform="translate(1567.19,694.30) scale(0.79,0.68)" vector-effect="non-scaling-stroke" d="M0.7,0.7 L6,0.7 Q8.2,0.7 8.2,2.9 L8.2,7 Q8.2,9.2 6,9.2 L0.7,9.2 M6,9.2 Q8.8,9.2 8.8,11.4 L8.8,16.5 Q8.8,18.7 6.6,18.7 L0.7,18.7 L0.7,0.7"/>
</g>
<line x1="1522" y1="746.00" x2="1534" y2="746.00" stroke="#e8e8e8" stroke-width="1.5"/>
<line x1="1552" y1="746.00" x2="1564" y2="746.00" stroke="#e8e8e8" stroke-width="1.5"/>
<line x1="1522" y1="756.40" x2="1534" y2="756.40" stroke="#e8e8e8" stroke-width="1.5"/>
<line x1="1552" y1="756.40" x2="1564" y2="756.40" stroke="#e8e8e8" stroke-width="1.5"/>
<line x1="1527.6" y1="766.80" x2="1534" y2="766.80" stroke="#e8e8e8" stroke-width="1.5"/>
<line x1="1552" y1="766.80" x2="1558" y2="766.80" stroke="#e8e8e8" stroke-width="1.5"/>
<line x1="1527.6" y1="777.20" x2="1534" y2="777.20" stroke="#e8e8e8" stroke-width="1.5"/>
<line x1="1552" y1="777.20" x2="1558" y2="777.20" stroke="#e8e8e8" stroke-width="1.5"/>
<line x1="1527.6" y1="787.60" x2="1534" y2="787.60" stroke="#e8e8e8" stroke-width="1.5"/>
<line x1="1552" y1="787.60" x2="1558" y2="787.60" stroke="#e8e8e8" stroke-width="1.5"/>
<line x1="1522" y1="798.00" x2="1534" y2="798.00" stroke="#e8e8e8" stroke-width="1.5"/>
<line x1="1552" y1="798.00" x2="1564" y2="798.00" stroke="#e8e8e8" stroke-width="1.5"/>
<line x1="1527.6" y1="808.40" x2="1534" y2="808.40" stroke="#e8e8e8" stroke-width="1.5"/>
<line x1="1552" y1="808.40" x2="1558" y2="808.40" stroke="#e8e8e8" stroke-width="1.5"/>
<line x1="1527.6" y1="818.80" x2="1534" y2="818.80" stroke="#e8e8e8" stroke-width="1.5"/>
<line x1="1552" y1="818.80" x2="1558" y2="818.80" stroke="#e8e8e8" stroke-width="1.5"/>
<line x1="1527.6" y1="829.20" x2="1534" y2="829.20" stroke="#e8e8e8" stroke-width="1.5"/>
<line x1="1552" y1="829.20" x2="1558" y2="829.20" stroke="#e8e8e8" stroke-width="1.5"/>
<line x1="1522" y1="839.60" x2="1534" y2="839.60" stroke="#e8e8e8" stroke-width="1.5"/>
<line x1="1552" y1="839.60" x2="1564" y2="839.60" stroke="#e8e8e8" stroke-width="1.5"/>
<line x1="1527.6" y1="850.00" x2="1534" y2="850.00" stroke="#e8e8e8" stroke-width="1.5"/>
<line x1="1552" y1="850.00" x2="1558" y2="850.00" stroke="#e8e8e8" stroke-width="1.5"/>
<line x1="1527.6" y1="860.40" x2="1534" y2="860.40" stroke="#e8e8e8" stroke-width="1.5"/>
<line x1="1552" y1="860.40" x2="1558" y2="860.40" stroke="#e8e8e8" stroke-width="1.5"/>
<line x1="1527.6" y1="870.80" x2="1534" y2="870.80" stroke="#e8e8e8" stroke-width="1.5"/>
<line x1="1552" y1="870.80" x2="1558" y2="870.80" stroke="#e8e8e8" stroke-width="1.5"/>
<line x1="1522" y1="881.20" x2="1534" y2="881.20" stroke="#e8e8e8" stroke-width="1.5"/>
<line x1="1552" y1="881.20" x2="1564" y2="881.20" stroke="#e8e8e8" stroke-width="1.5"/>
<rect x="1539.75" y="735.40" width="4.50" height="158.30" fill="#ffffff"/>
<text x="1513.50" y="751.00" font-size="14" fill="#f2f2f2" text-anchor="middle" letter-spacing="-1" stroke="#f2f2f2" stroke-width="0.35">6</text>
<text x="1574.30" y="751.00" font-size="14" fill="#f2f2f2" text-anchor="middle" letter-spacing="-1" stroke="#f2f2f2" stroke-width="0.35">6</text>
<text x="1506.00" y="803.00" font-size="14" fill="#f2f2f2" text-anchor="middle" letter-spacing="-1" stroke="#f2f2f2" stroke-width="0.35">-20</text>
<text x="1580.50" y="803.00" font-size="14" fill="#f2f2f2" text-anchor="middle" letter-spacing="-1" stroke="#f2f2f2" stroke-width="0.35">-20</text>
<text x="1507.30" y="844.00" font-size="14" fill="#f2f2f2" text-anchor="middle" letter-spacing="-1" stroke="#f2f2f2" stroke-width="0.35">-40</text>
<text x="1580.50" y="844.00" font-size="14" fill="#f2f2f2" text-anchor="middle" letter-spacing="-1" stroke="#f2f2f2" stroke-width="0.35">-40</text>
<text x="1506.00" y="885.50" font-size="14" fill="#f2f2f2" text-anchor="middle" letter-spacing="-1" stroke="#f2f2f2" stroke-width="0.35">OFF</text>
<text x="1581.70" y="885.50" font-size="14" fill="#f2f2f2" text-anchor="middle" letter-spacing="-1" stroke="#f2f2f2" stroke-width="0.35">OFF</text>
<rect x="1526.40" y="792.50" width="31.80" height="21.00" rx="3" fill="url(#thumb)"/>
<rect x="1530.40" y="801.70" width="23.80" height="2.00" fill="#a3adb1"/>
<rect x="1518.10" y="916.40" width="52.30" height="24.30" fill="none" stroke="#ececec" stroke-width="1.8"/>
<g transform="translate(1517.20,915.50)" fill="none" stroke="#e0e0e0" stroke-width="1.6" stroke-linejoin="round">
<path d="M16.5,10.2 L18.8,10.2 L25.8,6 L25.8,21 L18.8,16.8 L16.5,16.8 Z"/>
<path d="M29,9.5 Q31.4,13.5 29,17.8"/>
<path d="M31,7.2 Q34.8,13.5 31,19.8"/>
<path d="M33,4.6 Q38.6,13.5 33,22.4"/>
</g>
</svg>
</body></html>
